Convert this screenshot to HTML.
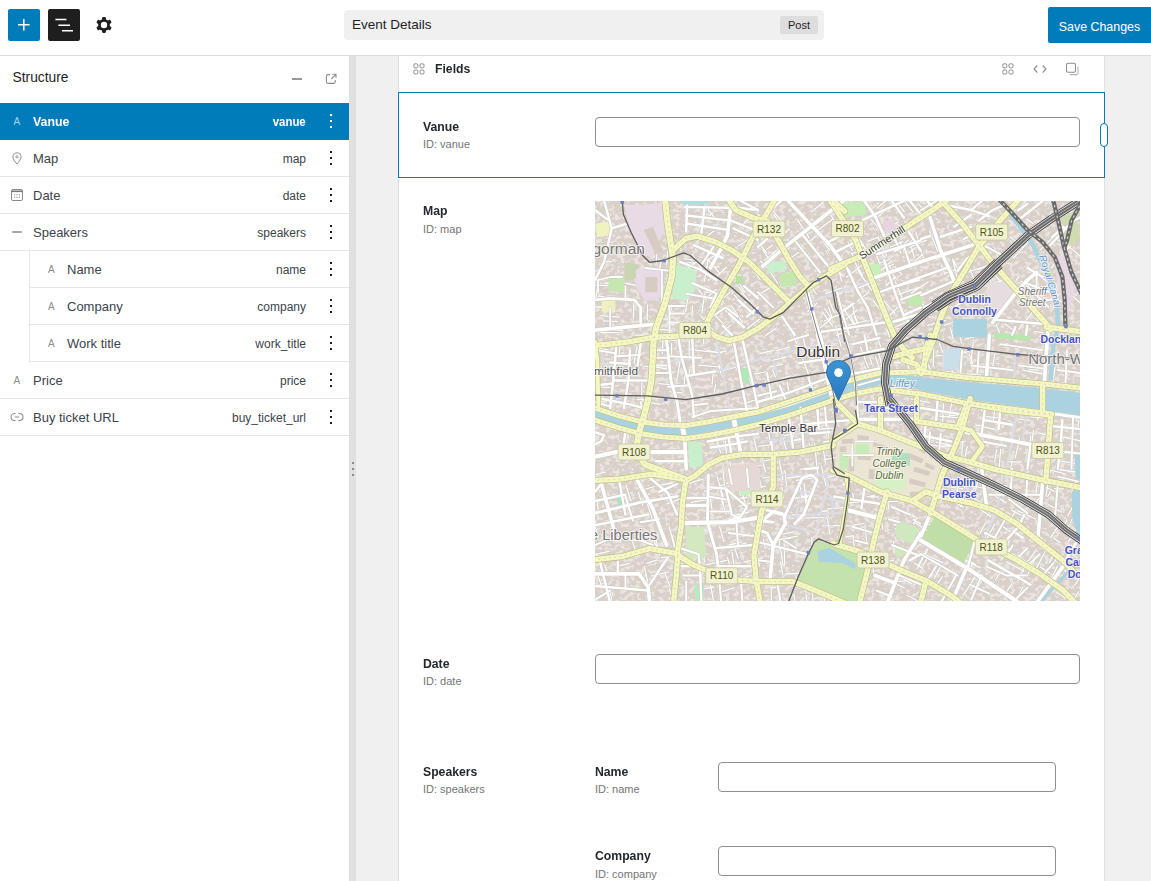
<!DOCTYPE html>
<html lang="en">
<head>
<meta charset="utf-8">
<title>Event Details</title>
<style>
*{box-sizing:border-box;margin:0;padding:0}
html,body{width:1151px;height:881px;overflow:hidden;background:#f0f0f0;font-family:"Liberation Sans",sans-serif;font-size:13px;color:#1e1e1e}
.abs{position:absolute}
#topbar{position:absolute;left:0;top:0;width:1151px;height:56px;background:#fff;border-bottom:1px solid #ddd}
.tbtn{position:absolute;top:9px;width:32px;height:32px;border-radius:2px}
#btn-add{left:8px;background:#007cba}
#btn-list{left:48px;background:#1e1e1e}
#titlebar{position:absolute;left:344px;top:10px;width:480px;height:30px;background:#f0f0f0;border-radius:4px}
#titlebar .t{position:absolute;left:8px;top:7px;font-size:13.5px;color:#1e1e1e}
#titlebar .badge{position:absolute;left:436px;top:6px;width:38px;height:18px;background:#ddd;border-radius:2px;font-size:11px;text-align:center;line-height:18px;color:#1e1e1e}
#save{position:absolute;left:1048px;top:7px;width:103px;height:36px;background:#007cba;color:#fff;font-size:12.4px;line-height:41px;text-align:center;border-radius:2px 0 0 2px}
#sidebar{position:absolute;left:0;top:56px;width:349px;height:825px;background:#fff}
#resizer{position:absolute;left:349px;top:56px;width:7px;height:825px;background:#e0e0e0}
#resizer i{position:absolute;left:3px;width:2px;height:2px;background:#8a8a8a}
#sidebar .head{position:absolute;left:12.5px;top:14px;font-size:13.8px;color:#1e1e1e}
.row{position:absolute;left:0;width:349px;height:37px;border-bottom:1px solid #e6e6e6;font-size:13px;color:#3c434a}
.row .lbl{position:absolute;left:33px;top:11px}
.row .id{position:absolute;right:43px;top:12px;font-size:12px}
.row.sub{left:29px;width:320px;border-left:1px solid #e6e6e6}
.row.sub .lbl{left:37px}
.row.sel{background:#007cba;color:#fff;border-bottom-color:#007cba}
.row.sel .lbl,.row.sel .id{font-weight:bold;transform:scaleX(.95);transform-origin:left}
.row.sel .id{transform-origin:right}
.ic{position:absolute}
.icA{position:absolute;left:13.5px;top:13px;font-size:10px;color:#8c8c8c;line-height:12px}
.row.sub .icA{left:18px}
.row.sel .icA{color:#a6d0e8;font-weight:normal}
.dots{position:absolute;right:17px;top:11px;width:2px;height:14px}
.dots i{position:absolute;left:0;width:2px;height:2px;background:#1e1e1e}
.row.sel .dots i{background:#fff}
#panel{position:absolute;left:398px;top:56px;width:707px;height:825px;background:#fff;border-left:1px solid #e0e0e0;border-right:1px solid #e0e0e0}
#selbox{position:absolute;left:398px;top:92px;width:707px;height:86px;border:1px solid #007cba;background:#fff}
.flabel{position:absolute;font-size:13px;font-weight:bold;color:#23282d;transform:scaleX(.94);transform-origin:left}
.fid{position:absolute;font-size:11px;color:#757575}
.inp{position:absolute;height:30px;border:1px solid #8c8f94;border-radius:4px;background:#fff}
#handle{position:absolute;left:1100px;top:123px;width:8px;height:24px;border:1.5px solid #007cba;border-radius:4px;background:#fff}
#map{position:absolute;left:595px;top:201px;width:485px;height:400px;background:#ddd6cf;overflow:hidden}
</style>
</head>
<body>
<div id="topbar">
  <div class="tbtn" id="btn-add"><svg width="32" height="32" viewBox="0 0 32 32"><path d="M15.8 9.9v11.6M10 15.7h11.6" stroke="#fff" stroke-width="1.5" fill="none"/></svg></div>
  <div class="tbtn" id="btn-list"><svg width="32" height="32" viewBox="0 0 32 32"><path d="M7.4 10.5h11M10.4 16.3h11.6M14 21.8h11" stroke="#fff" stroke-width="1.6" fill="none"/></svg></div>
  <svg id="gear" style="position:absolute;left:94px;top:15px" width="20" height="20" viewBox="-10 -10 20 20"><g fill="#1e1e1e"><circle r="5.9"/><g id="teeth"><rect x="-1.9" y="-7.9" width="3.8" height="15.8" rx="1.1"/><rect x="-1.9" y="-7.9" width="3.8" height="15.8" rx="1.1" transform="rotate(60)"/><rect x="-1.9" y="-7.9" width="3.8" height="15.8" rx="1.1" transform="rotate(120)"/></g></g><circle r="3.2" fill="#fff"/></svg>
  <div id="titlebar"><span class="t">Event Details</span><span class="badge">Post</span></div>
  <div id="save">Save Changes</div>
</div>
<div id="sidebar">
  <div class="head">Structure</div>
  <svg class="abs" style="left:291px;top:17px" width="12" height="12" viewBox="0 0 12 12"><path d="M1 6h10" stroke="#8c8c8c" stroke-width="1.8"/></svg>
  <svg class="abs" style="left:325px;top:16px" width="13" height="13" viewBox="0 0 13 13"><path d="M5 2.6H3A1.6 1.6 0 0 0 1.4 4.2v5.6A1.6 1.6 0 0 0 3 11.4h5.6a1.6 1.6 0 0 0 1.6-1.6V8" fill="none" stroke="#8c8c8c" stroke-width="1.1"/><path d="M6.4 7L10.8 2.4M7.4 2.2h3.6v3.6" fill="none" stroke="#8c8c8c" stroke-width="1.1"/></svg>
  <div class="row sel" style="top:47px"><span class="icA">A</span><span class="lbl">Vanue</span><span class="id">vanue</span><span class="dots"><i style="top:0"></i><i style="top:6px"></i><i style="top:12px"></i></span></div>
  <div class="row" style="top:84px"><svg class="ic" style="left:12px;top:12px" width="10" height="13" viewBox="0 0 10 13"><path d="M5 .8C2.6.8.9 2.6.9 4.8c0 2.6 2.6 5.6 4.1 7.2 1.500-1.600 4.100-4.600 4.100-7.200C9.100 2.600 7.400.800 5 .800z" fill="none" stroke="#8c8c8c" stroke-width="1"/><circle cx="5" cy="4.800" r="1.100" fill="none" stroke="#8c8c8c" stroke-width=".9"/></svg><span class="lbl">Map</span><span class="id">map</span><span class="dots"><i style="top:0"></i><i style="top:6px"></i><i style="top:12px"></i></span></div>
  <div class="row" style="top:121px"><svg class="ic" style="left:10px;top:11px" width="14" height="14" viewBox="0 0 14 14"><rect x="1.500" y="1.500" width="11" height="11" rx="1.500" fill="none" stroke="#8c8c8c" stroke-width="1"/><path d="M1.500 3.300h11" stroke="#757575" stroke-width="1.600"/><path d="M4 6.800h1.200M6.400 6.800h1.200M8.800 6.800h1.200M4 9.300h1.200M6.400 9.300h1.200M8.800 9.300h1.200" stroke="#8c8c8c" stroke-width="1"/></svg><span class="lbl">Date</span><span class="id">date</span><span class="dots"><i style="top:0"></i><i style="top:6px"></i><i style="top:12px"></i></span></div>
  <div class="row" style="top:158px"><svg class="ic" style="left:11px;top:12px" width="12" height="12" viewBox="0 0 12 12"><path d="M1.200 6h9.600" stroke="#8c8c8c" stroke-width="1.600"/></svg><span class="lbl">Speakers</span><span class="id">speakers</span><span class="dots"><i style="top:0"></i><i style="top:6px"></i><i style="top:12px"></i></span></div>
  <div class="row sub" style="top:195px"><span class="icA">A</span><span class="lbl">Name</span><span class="id">name</span><span class="dots"><i style="top:0"></i><i style="top:6px"></i><i style="top:12px"></i></span></div>
  <div class="row sub" style="top:232px"><span class="icA">A</span><span class="lbl">Company</span><span class="id">company</span><span class="dots"><i style="top:0"></i><i style="top:6px"></i><i style="top:12px"></i></span></div>
  <div class="row sub" style="top:269px"><span class="icA">A</span><span class="lbl">Work title</span><span class="id">work_title</span><span class="dots"><i style="top:0"></i><i style="top:6px"></i><i style="top:12px"></i></span></div>
  <div class="row" style="top:306px"><span class="icA">A</span><span class="lbl">Price</span><span class="id">price</span><span class="dots"><i style="top:0"></i><i style="top:6px"></i><i style="top:12px"></i></span></div>
  <div class="row" style="top:343px"><svg class="ic" style="left:10px;top:13px" width="14" height="10" viewBox="0 0 14 10"><path d="M5.600 1.500H4.600a3.500 3.500 0 0 0 0 7h1M8.400 1.500h1a3.500 3.500 0 0 1 0 7h-1M4.800 5h4.400" fill="none" stroke="#8c8c8c" stroke-width="1.100"/></svg><span class="lbl">Buy ticket URL</span><span class="id">buy_ticket_url</span><span class="dots"><i style="top:0"></i><i style="top:6px"></i><i style="top:12px"></i></span></div>
</div>
<div id="resizer"><i style="top:406px"></i><i style="top:412px"></i><i style="top:418px"></i></div>
<div id="panel"></div>
<div class="flabel" style="left:435px;top:61px">Fields</div>
<svg class="abs" style="left:413px;top:63px" width="12" height="12" viewBox="0 0 12 12"><g fill="none" stroke="#8c8c8c" stroke-width="1"><rect x=".8" y=".8" width="4" height="4" rx="1.2"/><rect x="7" y=".8" width="4" height="4" rx="1.2"/><rect x=".8" y="7" width="4" height="4" rx="1.2"/><rect x="7" y="7" width="4" height="4" rx="1.2"/></g></svg>
<svg class="abs" style="left:1002px;top:63px" width="12" height="12" viewBox="0 0 12 12"><g fill="none" stroke="#8c8c8c" stroke-width="1"><rect x=".8" y=".8" width="4" height="4" rx="1.2"/><rect x="7" y=".8" width="4" height="4" rx="1.2"/><rect x=".8" y="7" width="4" height="4" rx="1.2"/><rect x="7" y="7" width="4" height="4" rx="1.2"/></g></svg>
<svg class="abs" style="left:1033px;top:64px" width="14" height="10" viewBox="0 0 14 10"><path d="M4.300 1.500L1 5l3.300 3.500M9.700 1.500L13 5 9.700 8.500" fill="none" stroke="#8c8c8c" stroke-width="1.100"/></svg>
<svg class="abs" style="left:1065px;top:62px" width="15" height="14" viewBox="0 0 15 14"><rect x="1.500" y="1.300" width="9" height="9" rx="1.600" fill="none" stroke="#8c8c8c" stroke-width="1.100"/><path d="M13 4.500v6.500a1.600 1.600 0 0 1-1.600 1.600H4.800" fill="none" stroke="#b4b4b4" stroke-width="1.100"/></svg>
<div id="selbox"></div>
<div class="flabel" style="left:423px;top:119px">Vanue</div>
<div class="fid" style="left:423px;top:138px">ID: vanue</div>
<div class="inp" style="left:595px;top:117px;width:485px"></div>
<div id="handle"></div>
<div class="flabel" style="left:423px;top:203px">Map</div>
<div class="fid" style="left:423px;top:223px">ID: map</div>
<div id="map"><svg width="485" height="400" viewBox="0 0 485 400" style="display:block">
<defs><filter id="tx" x="0" y="0" width="100%" height="100%"><feTurbulence type="fractalNoise" baseFrequency="0.2 0.26" numOctaves="2" seed="7" result="n"/><feColorMatrix in="n" type="matrix" values="0 0 0 0 0.93  0 0 0 0 0.90  0 0 0 0 0.875  0 0 0 7 -3.5"/></filter></defs>
<rect width="485" height="400" fill="#d9d0c9"/>
<rect width="485" height="400" filter="url(#tx)" opacity=".6"/>
<path d="M74.3 325.9L79.4 346.1M97.0 375.5L110.9 370.7M132.3 356.2L134.8 364.1M106.2 339.4L109.6 360.6M7.2 287.8L12.5 301.7M70.2 373.0L75.1 386.0M102.3 331.1L116.4 327.8M136.9 351.2L140.4 372.8M9.8 364.2L13.4 375.0M156.9 373.9L159.3 386.4M74.3 387.7L80.8 407.2M125.6 297.4L131.3 312.8M121.9 275.1L128.2 295.6M130.2 289.4L132.8 296.8M116.0 288.4L125.5 285.7M28.9 307.3L41.4 302.8M140.3 298.5L151.7 296.3M15.0 390.4L18.1 406.8M51.4 299.7L57.1 317.4M37.4 340.8L42.8 355.6M76.9 334.4L82.7 355.0M145.5 377.8L154.3 374.8M152.3 287.0L158.1 304.1M61.6 284.9L77.4 282.0M115.4 298.2L117.1 308.6M23.4 365.0L34.5 362.3M138.2 342.6L143.1 357.2M1.9 300.0L3.6 309.9M59.2 339.9L62.5 348.9M158.9 345.6L164.7 365.2M1.4 273.4L10.2 271.2M-7.0 355.0L14.0 350.4M163.6 274.0L166.1 285.5M111.6 363.6L131.6 359.3M107.0 388.2L119.1 386.0M133.4 347.1L151.5 341.9M92.9 282.6L108.0 278.2M110.2 322.1L130.1 318.9M131.7 282.5L144.9 279.2M71.9 302.8L86.9 297.1M144.0 305.4L159.7 301.2M30.9 283.9L36.0 300.2M140.5 314.0L153.8 311.0M126.6 391.0L139.4 386.7M44.7 289.9L59.8 285.5M115.5 383.8L119.2 403.2M43.2 291.3L47.6 304.3M50.4 372.1L53.7 386.1M1.3 384.6L9.1 382.4M49.3 365.3L52.7 380.5M1.8 371.3L6.4 384.4M102.5 324.4L105.1 331.7M148.8 361.2L167.5 356.8M0.5 326.7L3.1 336.1M51.8 362.4L62.3 358.9M56.0 375.1L73.8 370.8M109.3 290.5L129.1 283.3M59.8 333.9L64.6 354.0M66.1 356.8L86.9 352.6M103.8 353.9L107.9 372.7M159.3 329.1L163.2 350.5M131.3 318.4L151.1 312.3M124.7 326.0L128.8 340.7M131.2 288.6L132.8 296.4M23.6 332.7L25.4 341.6M147.5 335.7L164.6 332.4M82.0 309.5L91.7 306.0M132.0 344.5L146.4 341.1M145.8 287.6L151.4 306.5M87.2 297.3L101.9 294.9M-4.7 199.7L11.3 201.1M58.1 128.0L77.0 129.3M42.1 198.6L57.2 198.5M8.2 119.8L22.3 120.3M31.1 82.5L45.0 84.9M89.1 57.6L97.9 59.2M38.9 99.7L38.4 117.0M5.8 131.5L23.7 131.6M52.6 103.9L52.2 118.8M25.0 145.0L24.1 154.4M63.6 182.6L83.2 184.4M109.6 92.9L107.0 111.9M120.7 183.1L118.9 193.2M31.4 60.6L30.8 78.5M5.7 114.7L24.5 116.1M76.9 191.8L86.9 191.6M83.7 130.4L98.3 130.5M8.7 60.5L16.8 60.7M9.9 82.0L25.3 83.4M113.0 58.5L109.5 80.1M93.0 97.2L90.5 110.9M72.7 50.3L71.5 63.7M49.7 165.1L59.3 166.7M61.6 52.6L61.4 62.0M94.6 148.1L112.0 150.7M118.7 168.5L117.1 183.0M94.9 168.2L91.8 186.1M85.1 160.1L81.7 180.0M-0.4 105.7L17.4 106.9M76.6 142.4L76.7 154.8M42.1 145.6L39.0 162.3M113.6 150.7L126.4 151.9M-8.0 145.8L13.5 148.8M-0.5 84.1L12.6 84.6M108.7 132.1L108.7 142.9M111.8 149.3L127.0 152.1M83.1 61.8L99.1 61.8M13.3 129.2L27.3 129.4M39.9 134.1L61.1 134.0M73.0 138.8L84.2 139.4M2.4 86.1L0.9 97.4M46.9 180.5L46.7 198.8M102.4 66.1L124.3 65.9M109.7 91.0L123.8 92.1M47.4 200.2L65.0 203.4M70.6 122.9L79.2 123.8M14.9 114.0L15.0 128.9M64.4 117.5L75.3 118.4M103.4 164.1L125.3 166.2M94.2 138.6L94.1 158.9M68.1 135.1L67.4 152.4M25.0 201.3L34.8 202.6M3.6 95.0L11.0 96.3M65.5 61.6L64.5 70.1M76.7 103.4L74.8 118.5M89.5 174.7L89.2 186.9M74.9 160.7L74.8 179.9M97.6 104.9L96.8 115.8M60.0 165.8L71.7 168.0M5.4 185.8L17.9 186.7M206.1 86.9L216.6 98.2M143.9 86.0L148.5 92.7M255.8 31.4L267.3 45.0M177.2 9.0L188.6 22.7M312.3 129.6L328.9 117.0M168.0 49.2L174.5 58.7M177.3 52.3L186.3 46.4M137.7 71.2L145.8 81.1M222.3 29.8L237.8 17.9M95.7 72.7L105.0 66.5M242.7 115.1L259.9 102.1M109.5 3.6L120.9 18.5M243.7 21.7L250.7 17.2M143.6 106.5L152.2 100.2M170.8 134.4L181.4 127.0M262.1 100.2L274.0 91.0M247.5 121.3L262.5 109.1M316.4 92.1L333.3 80.8M188.4 62.3L203.9 51.2M178.8 13.7L191.4 31.6M324.2 3.6L331.3 12.4M275.6 18.1L286.9 30.4M308.3 -1.3L318.1 11.1M148.1 93.0L154.9 100.7M158.8 26.5L166.1 20.1M285.3 69.7L296.9 59.8M171.4 65.2L182.8 82.5M102.9 131.1L111.0 124.7M213.0 41.8L224.6 32.3M93.3 66.9L101.9 60.7M235.5 13.9L245.5 28.5M300.1 65.5L307.1 73.8M218.6 23.3L228.0 17.4M291.1 117.7L305.0 104.3M112.5 58.1L124.1 71.5M296.5 34.3L305.0 47.6M108.8 118.1L124.9 105.0M128.3 106.4L137.3 118.2M165.7 60.0L171.0 66.2M113.7 58.7L127.0 47.7M246.7 -6.5L257.2 9.9M227.3 57.5L233.5 66.1M139.6 75.1L149.7 91.2M161.8 39.7L171.4 51.4M139.8 94.4L146.2 103.1M264.5 38.3L272.9 51.3M114.3 94.6L121.0 88.4M291.0 84.4L300.7 75.7M121.7 51.4L127.9 58.4M214.1 81.8L221.4 93.0M169.2 59.2L179.8 52.0M325.1 99.8L336.2 113.4M171.5 48.4L177.4 44.0M212.6 110.8L221.9 102.2M275.2 124.7L282.7 119.1M123.4 101.0L134.6 91.7M288.5 32.1L302.5 21.2M111.0 36.0L119.0 30.1M313.1 52.2L322.8 45.3M120.2 114.1L134.8 130.0M152.3 127.4L164.6 118.1M117.8 115.8L131.1 106.8M229.8 107.7L235.6 116.6M100.2 21.1L105.2 27.5M161.7 95.2L175.9 86.1M281.8 7.2L294.0 -2.8M184.9 73.3L190.6 80.5M228.0 40.5L234.7 49.2M123.6 135.4L135.9 123.6M239.5 97.1L249.9 89.0M327.9 117.3L339.6 109.1M225.6 126.5L236.1 117.9M306.7 47.4L317.4 39.2M264.8 72.3L276.6 89.0M105.7 21.9L117.8 11.7M103.5 88.7L111.5 98.9M185.6 35.7L194.3 28.0M248.9 108.0L260.6 126.0M271.3 72.3L277.1 80.8M117.8 79.0L131.6 66.2M163.0 47.5L170.7 40.1M185.1 40.1L195.6 56.2M307.9 44.1L313.4 39.0M202.6 18.8L214.3 37.0M136.4 104.5L147.5 121.7M303.2 130.6L309.1 138.1M303.3 2.8L309.2 10.7M307.7 112.6L314.5 122.2M313.6 66.0L326.5 54.2M261.7 22.2L269.4 30.9M279.1 43.9L290.3 56.7M143.3 45.0L156.6 36.3M244.1 15.4L253.1 8.9M216.6 10.8L228.2 1.5M283.7 15.3L291.9 8.3M158.9 69.6L165.0 78.4M97.1 53.2L109.0 71.4M206.9 30.9L223.1 17.6M248.0 109.4L258.0 102.0M251.5 76.3L267.0 64.2M127.7 88.3L141.6 75.8M278.0 99.5L289.6 114.1M231.0 63.3L237.4 71.4M227.1 110.7L237.7 124.9M211.6 56.0L216.5 61.4M106.2 115.3L118.6 129.7M144.6 25.5L159.6 14.0M240.1 66.7L248.1 75.2M289.4 19.8L294.4 26.5M288.6 99.8L300.2 112.6M269.5 165.1L274.0 176.7M399.5 46.6L405.8 63.9M274.8 156.0L277.0 163.2M305.1 40.4L309.2 51.1M357.6 58.2L362.0 76.1M311.7 160.5L315.2 170.6M334.8 30.5L342.9 50.6M292.1 128.5L294.6 136.0M304.0 93.3L323.2 86.7M262.9 87.1L280.3 80.2M268.0 60.6L271.2 69.5M401.3 123.7L406.5 136.4M241.5 134.3L253.2 129.2M264.5 68.4L267.4 75.1M278.4 77.0L282.9 94.1M363.6 130.3L366.7 142.3M295.0 49.2L305.7 44.1M314.7 46.2L331.9 39.2M259.2 114.9L262.1 121.9M324.9 47.9L330.0 60.2M340.0 59.1L356.5 52.1M300.5 80.9L307.3 97.3M288.4 67.5L298.9 63.0M327.6 140.8L334.8 155.6M383.4 68.5L399.1 62.0M372.5 71.1L392.8 64.5M295.6 46.2L307.8 40.6M279.9 50.5L285.3 63.9M346.4 64.1L349.7 73.0M258.1 110.4L263.1 122.8M230.7 92.7L247.2 86.9M241.5 98.5L247.1 110.3M272.5 40.4L283.6 36.2M277.5 121.1L281.6 136.0M394.5 78.2L400.1 93.4M332.7 124.3L350.6 119.6M374.0 153.0L378.0 163.4M257.1 102.3L259.1 109.6M256.5 51.9L264.5 72.0M233.5 106.1L236.8 116.1M342.7 105.1L348.4 118.4M390.5 84.9L408.9 78.5M355.2 126.7L358.3 138.0M252.7 124.4L271.5 119.6M281.5 133.9L285.6 145.8M285.3 62.0L295.2 57.8M243.1 51.0L250.3 47.7M360.0 105.2L372.5 99.4M241.4 60.9L246.8 80.2M350.5 72.1L362.9 68.4M358.5 155.2L369.6 150.7M348.9 124.4L361.5 120.0M294.8 130.0L303.3 127.5M333.1 163.4L336.0 170.0M298.4 127.0L314.2 119.8M240.5 124.3L246.1 145.4M356.9 169.0L361.7 179.2M325.8 99.2L328.6 106.1M374.0 65.9L381.2 83.5M398.8 80.8L404.7 98.3M251.0 62.7L268.9 56.3M316.6 46.6L319.4 57.1M256.1 115.6L262.8 129.5M294.4 64.8L300.0 77.9M283.2 36.8L291.9 55.2M265.6 146.1L273.2 166.7M298.9 34.2L305.7 52.0M274.3 169.0L289.9 163.9M370.1 138.2L383.4 134.8M253.1 41.2L257.3 49.7M320.7 30.9L324.1 42.0M323.7 144.9L325.5 151.9M365.3 152.8L377.7 149.0M392.4 92.4L400.7 90.3M229.5 119.8L248.5 111.7M344.4 142.7L349.0 154.3M280.5 155.9L284.4 167.6M358.5 59.1L363.6 70.0M257.0 52.7L273.3 47.0M234.1 99.1L239.1 111.6M479.7 301.9L472.7 315.2M312.0 394.3L328.1 402.8M378.5 362.0L372.5 370.4M479.3 314.4L471.4 329.7M332.6 348.4L322.2 367.6M416.7 382.7L411.3 391.4M398.8 294.3L411.2 301.9M417.3 329.5L428.9 336.9M409.6 337.1L402.4 351.4M413.4 347.5L406.2 359.2M477.4 366.8L490.0 372.9M380.3 375.6L368.5 393.9M347.5 375.8L339.1 387.4M439.6 338.2L455.5 349.4M422.6 309.6L440.8 318.0M453.6 303.8L466.7 311.2M404.8 372.1L400.5 379.0M462.5 365.2L453.9 382.1M320.3 321.7L335.9 332.5M462.5 375.3L457.5 386.4M459.9 350.2L454.3 361.7M328.3 352.8L348.1 361.9M419.5 331.8L427.8 337.2M419.3 311.9L413.7 322.2M319.6 362.2L327.8 367.4M476.0 351.2L472.2 359.1M432.8 359.8L423.1 379.5M330.1 351.8L324.0 363.4M388.2 337.8L380.8 348.7M335.7 347.5L351.2 355.8M461.3 358.2L454.9 367.5M441.2 348.9L433.8 359.4M354.8 329.7L349.3 341.7M416.6 309.1L432.1 317.2M351.0 324.2L342.1 342.6M414.8 339.6L403.8 356.0M369.6 324.6L364.9 331.5M461.0 391.0L471.3 397.4M370.6 332.5L363.2 344.4M483.8 390.5L475.3 404.1M411.7 360.9L428.8 370.3M367.9 357.5L380.6 363.4M371.4 297.3L365.5 305.5M333.1 356.2L328.6 363.1M445.5 366.1L454.6 372.0M296.6 380.9L309.3 386.9M361.9 344.5L368.0 348.7M347.3 339.3L364.3 347.4M318.6 340.1L314.1 347.7M379.5 286.8L373.6 295.7M388.8 376.1L381.2 389.5M482.1 341.5L476.9 349.2M483.5 324.0L473.1 341.1M440.1 358.3L431.7 375.6M322.3 316.4L318.5 322.8M300.1 327.7L316.9 338.0M472.0 318.9L468.0 326.7M480.4 341.7L469.7 358.9M350.1 366.3L360.7 373.7M391.4 320.3L385.0 332.1M456.5 288.7L452.7 295.5M335.6 293.1L346.8 299.7M345.9 364.9L339.3 377.5M481.4 279.8L476.1 291.8M405.6 323.8L415.7 331.1M362.4 335.5L354.2 349.0M313.9 311.9L320.4 316.1M462.8 325.7L455.4 336.8M484.3 377.1L479.9 384.1M450.3 350.3L441.3 367.4M417.7 345.3L413.5 351.7M469.7 369.6L476.0 373.5M369.2 359.5L385.6 366.8M441.2 333.3L447.9 338.0M374.8 295.3L386.8 301.8M323.6 377.5L319.2 384.3M318.2 318.4L325.6 322.9M330.1 327.4L348.0 338.0M458.0 336.8L465.3 341.8M427.8 386.2L421.7 397.3M447.5 291.7L440.6 302.5M330.3 321.4L344.5 328.3M399.9 322.7L392.4 336.7M402.9 336.8L413.1 343.7M335.5 311.0L350.9 319.1M307.2 377.1L316.5 382.6M417.9 343.7L410.6 355.0M384.4 307.6L395.7 315.6M451.5 286.6L462.0 291.5M355.1 298.5L368.2 306.3M331.3 268.8L350.0 272.5M423.1 197.5L422.0 212.5M462.7 259.6L482.9 262.8M373.6 269.3L369.5 286.6M322.9 245.7L333.6 246.7M346.6 235.6L345.5 246.4M407.0 274.0L405.9 285.1M424.6 237.2L420.4 256.5M463.7 268.5L480.4 271.0M383.5 260.4L382.5 281.5M442.5 280.2L440.9 292.6M356.1 286.1L368.2 288.0M338.4 274.1L334.5 290.5M483.9 219.3L482.5 228.0M327.4 195.5L344.3 196.3M453.5 268.6L470.2 272.8M347.1 244.8L362.0 245.5M438.5 229.4L437.1 239.2M414.6 282.1L413.8 296.4M373.0 262.1L384.4 262.9M462.7 275.5L483.4 280.5M412.3 260.6L426.7 261.2M328.5 242.7L349.2 246.1M459.7 287.6L468.4 287.9M435.6 234.7L434.8 254.2M315.7 197.9L334.5 201.6M380.7 223.9L399.7 228.5M367.3 241.7L366.6 260.2M389.3 215.3L406.3 217.1M360.9 240.1L370.2 240.8M424.4 218.2L435.0 219.3M344.5 215.1L364.6 216.9M433.8 262.3L431.9 280.1M354.9 214.1L373.3 215.0M383.5 277.1L380.5 289.3M446.9 269.9L455.8 271.0M372.2 245.5L369.7 258.0M317.7 241.1L336.8 243.7M348.5 203.0L347.5 223.7M369.5 282.7L389.9 287.6M357.8 196.0L353.9 216.8M468.1 236.0L485.6 239.9M475.6 194.6L474.9 205.6M374.5 207.3L373.7 214.9M416.9 261.0L414.7 275.9M356.7 199.6L364.7 201.5M407.6 198.6L403.6 219.1M452.7 283.6L451.0 294.9M401.0 202.2L397.8 221.6M443.5 231.8L450.6 233.5M443.2 209.2L442.5 218.7M405.6 248.2L404.1 267.1M374.0 193.5L373.4 200.7M401.7 248.6L399.6 261.0M419.1 224.2L416.8 244.3M465.3 215.3L477.1 216.9M341.1 241.2L360.9 245.5M436.0 215.8L445.5 216.7M359.9 201.9L381.0 203.3M396.9 283.5L412.2 285.2M406.0 142.3L413.0 142.7M341.6 154.1L355.4 155.7M378.3 141.2L375.8 162.6M460.1 165.9L458.6 176.3M400.2 150.8L397.7 165.2M371.5 172.8L385.7 174.0M362.3 172.8L372.2 173.3M427.6 169.1L448.0 173.0M352.0 170.6L370.8 173.4M338.8 145.2L338.1 166.0M472.9 170.4L470.5 186.3M342.9 181.1L359.9 181.0M434.2 168.7L444.0 169.2M439.6 130.7L448.4 131.7M263.1 177.7L281.4 173.9M177.2 159.3L191.2 156.0M153.1 174.0L159.3 191.9M164.7 152.5L179.1 149.3M282.6 147.4L286.6 164.2M280.8 181.0L292.0 179.0M159.4 173.1L171.1 170.7M207.9 158.4L214.9 177.1M214.8 149.8L224.3 146.7M177.6 168.6L180.3 175.9M181.8 149.3L194.6 146.2M192.2 181.2L193.7 189.9M275.9 205.9L292.0 201.8M207.2 133.3L212.7 154.5M209.9 152.5L218.6 149.3M247.3 183.7L258.8 181.2M127.7 169.7L140.7 166.1M123.9 151.3L131.6 149.9M187.3 177.4L195.9 174.9M229.6 182.0L245.7 177.4M123.9 163.4L125.8 172.1M197.1 130.8L201.6 142.9M213.8 155.8L227.8 153.2M149.3 202.7L160.2 198.8M268.4 151.4L280.9 147.8M174.1 166.2L187.5 163.2M159.1 237.7L162.5 253.7M228.8 258.8L242.7 256.2M219.7 242.5L221.7 264.1M205.2 296.8L216.5 295.4M192.8 240.6L206.2 238.7M139.0 279.3L160.4 275.7M134.8 260.8L138.3 278.9M124.3 282.5L128.6 303.9M227.5 243.0L230.5 262.1M205.3 268.4L223.6 266.0M181.1 291.3L183.1 306.6M210.6 290.2L211.9 302.0M173.0 227.7L175.4 242.4M132.8 285.6L149.7 284.1M166.7 255.5L170.6 271.1M140.9 282.9L161.9 279.5M203.6 278.1L207.3 295.1M179.6 217.8L182.3 229.9M144.1 285.5L145.4 294.6M109.1 229.8L118.5 227.6M167.8 276.9L178.7 275.6M127.7 267.0L129.9 286.8M120.1 261.1L139.8 256.9M184.4 260.1L188.0 278.9M189.1 234.9L199.2 232.5M157.3 288.0L170.6 285.2M147.1 277.8L156.6 276.4M130.3 240.4L132.2 260.4M205.8 223.1L206.8 230.7M102.5 226.7L118.0 224.2M232.4 218.9L233.5 234.9M120.9 234.9L125.6 251.7M163.9 245.3L175.7 243.8M128.8 246.0L140.9 243.5M188.1 237.3L191.3 248.6M176.2 239.3L177.6 253.3M192.4 277.0L208.6 275.0M169.4 259.8L182.0 257.3M228.5 241.0L247.1 237.9M221.6 266.7L223.2 274.0M226.4 265.6L231.2 285.1M151.7 266.0L165.4 264.3M218.3 228.5L239.0 227.1M176.8 238.6L177.9 253.7M96.3 301.3L117.9 297.6M195.7 224.4L198.9 236.9M210.2 268.7L223.7 267.6M232.3 276.3L245.8 272.9M147.5 259.6L150.3 274.5M195.1 240.1L205.0 237.3M298.7 340.2L299.1 352.2M277.8 360.9L278.4 371.8M272.0 295.8L279.4 294.5M227.8 390.2L229.5 399.5M185.4 345.9L188.1 365.1M237.8 324.7L245.5 324.7M178.1 339.6L195.6 337.2M287.5 361.1L298.6 359.5M201.2 375.8L202.8 386.3M242.5 324.6L259.6 324.9M227.4 325.2L235.3 324.5M298.9 324.0L306.2 322.6M291.4 292.2L293.9 307.8M232.7 307.9L251.1 306.3M285.2 278.0L285.5 286.2M248.9 359.2L250.8 378.8M275.8 296.2L283.5 295.9M286.5 320.8L287.8 328.1M245.4 380.1L249.0 399.5M186.7 286.1L188.6 297.3M184.2 338.6L184.7 348.1M232.4 317.7L234.9 333.0M186.6 311.0L189.5 326.9M216.8 336.2L216.9 352.0M256.4 324.4L269.0 322.4M197.4 313.7L205.1 313.7M285.3 300.9L302.8 300.4M176.2 388.3L176.5 406.8M241.6 395.0L254.0 394.9M294.7 381.1L315.0 379.7M214.0 346.8L223.1 346.9M251.1 308.2L251.3 316.1M224.6 377.7L225.2 387.5M254.4 302.0L266.8 300.3M201.6 279.3L216.8 277.0M198.8 393.1L201.0 404.8M185.0 338.3L202.4 335.2M210.5 316.9L231.6 316.6M226.0 352.6L228.3 370.6M189.1 342.5L189.7 364.0M185.4 360.7L187.8 373.6M157.7 290.5L179.2 289.5M258.2 335.2L260.1 354.5M248.7 281.6L257.4 280.6M168.4 338.2L170.1 347.5M209.3 283.0L210.6 302.3M230.2 349.4L250.5 348.6M190.8 373.0L212.4 371.9M225.5 310.5L232.6 309.8M161.2 294.7L175.8 293.4M264.0 313.9L285.9 312.9M216.4 380.8L218.0 399.8M211.0 392.9L212.6 407.0M257.9 292.3L258.7 300.5M269.9 324.3L271.6 340.2M189.8 269.3L192.1 289.5M175.3 387.0L184.2 386.2M182.6 333.9L199.4 330.9M198.3 297.5L218.9 293.7M250.8 336.0L258.3 334.7M400.2 75.0L407.5 81.9M424.1 75.4L411.4 91.8M460.1 34.2L445.0 49.1M396.8 58.9L410.2 72.2M480.4 24.3L466.6 40.4M459.5 95.8L467.0 101.6M467.3 53.5L456.3 67.0M473.0 60.6L467.5 68.4M410.0 122.8L419.9 130.6M443.7 74.6L458.0 84.8M474.9 46.2L490.0 59.5M426.0 80.1L436.3 88.2M474.1 80.2L461.9 95.6M414.9 35.8L427.9 46.2M432.9 41.6L418.6 56.7M480.7 4.2L471.0 17.6M478.2 42.1L471.1 49.7M439.5 31.6L432.7 40.7M461.4 37.7L475.1 47.1M469.7 75.1L465.0 81.7M432.2 -1.6L422.1 10.7M437.3 111.5L423.9 128.4M465.3 8.8L472.0 14.6M431.5 17.9L438.3 22.7M473.6 91.8L489.0 105.2" fill="none" stroke="#cbc5bf" stroke-width="2.2" stroke-linecap="round"/>
<path d="M74.3 325.9L79.4 346.1M97.0 375.5L110.9 370.7M132.3 356.2L134.8 364.1M106.2 339.4L109.6 360.6M7.2 287.8L12.5 301.7M70.2 373.0L75.1 386.0M102.3 331.1L116.4 327.8M136.9 351.2L140.4 372.8M9.8 364.2L13.4 375.0M156.9 373.9L159.3 386.4M74.3 387.7L80.8 407.2M125.6 297.4L131.3 312.8M121.9 275.1L128.2 295.6M130.2 289.4L132.8 296.8M116.0 288.4L125.5 285.7M28.9 307.3L41.4 302.8M140.3 298.5L151.7 296.3M15.0 390.4L18.1 406.8M51.4 299.7L57.1 317.4M37.4 340.8L42.8 355.6M76.9 334.4L82.7 355.0M145.5 377.8L154.3 374.8M152.3 287.0L158.1 304.1M61.6 284.9L77.4 282.0M115.4 298.2L117.1 308.6M23.4 365.0L34.5 362.3M138.2 342.6L143.1 357.2M1.9 300.0L3.6 309.9M59.2 339.9L62.5 348.9M158.9 345.6L164.7 365.2M1.4 273.4L10.2 271.2M-7.0 355.0L14.0 350.4M163.6 274.0L166.1 285.5M111.6 363.6L131.6 359.3M107.0 388.2L119.1 386.0M133.4 347.1L151.5 341.9M92.9 282.6L108.0 278.2M110.2 322.1L130.1 318.9M131.7 282.5L144.9 279.2M71.9 302.8L86.9 297.1M144.0 305.4L159.7 301.2M30.9 283.9L36.0 300.2M140.5 314.0L153.8 311.0M126.6 391.0L139.4 386.7M44.7 289.9L59.8 285.5M115.5 383.8L119.2 403.2M43.2 291.3L47.6 304.3M50.4 372.1L53.7 386.1M1.3 384.6L9.1 382.4M49.3 365.3L52.7 380.5M1.8 371.3L6.4 384.4M102.5 324.4L105.1 331.7M148.8 361.2L167.5 356.8M0.5 326.7L3.1 336.1M51.8 362.4L62.3 358.9M56.0 375.1L73.8 370.8M109.3 290.5L129.1 283.3M59.8 333.9L64.6 354.0M66.1 356.8L86.9 352.6M103.8 353.9L107.9 372.7M159.3 329.1L163.2 350.5M131.3 318.4L151.1 312.3M124.7 326.0L128.8 340.7M131.2 288.6L132.8 296.4M23.6 332.7L25.4 341.6M147.5 335.7L164.6 332.4M82.0 309.5L91.7 306.0M132.0 344.5L146.4 341.1M145.8 287.6L151.4 306.5M87.2 297.3L101.9 294.9M-4.7 199.7L11.3 201.1M58.1 128.0L77.0 129.3M42.1 198.6L57.2 198.5M8.2 119.8L22.3 120.3M31.1 82.5L45.0 84.9M89.1 57.6L97.9 59.2M38.9 99.7L38.4 117.0M5.8 131.5L23.7 131.6M52.6 103.9L52.2 118.8M25.0 145.0L24.1 154.4M63.6 182.6L83.2 184.4M109.6 92.9L107.0 111.9M120.7 183.1L118.9 193.2M31.4 60.6L30.8 78.5M5.7 114.7L24.5 116.1M76.9 191.8L86.9 191.6M83.7 130.4L98.3 130.5M8.7 60.5L16.8 60.7M9.9 82.0L25.3 83.4M113.0 58.5L109.5 80.1M93.0 97.2L90.5 110.9M72.7 50.3L71.5 63.7M49.7 165.1L59.3 166.7M61.6 52.6L61.4 62.0M94.6 148.1L112.0 150.7M118.7 168.5L117.1 183.0M94.9 168.2L91.8 186.1M85.1 160.1L81.7 180.0M-0.4 105.7L17.4 106.9M76.6 142.4L76.7 154.8M42.1 145.6L39.0 162.3M113.6 150.7L126.4 151.9M-8.0 145.8L13.5 148.8M-0.5 84.1L12.6 84.6M108.7 132.1L108.7 142.9M111.8 149.3L127.0 152.1M83.1 61.8L99.1 61.8M13.3 129.2L27.3 129.4M39.9 134.1L61.1 134.0M73.0 138.8L84.2 139.4M2.4 86.1L0.9 97.4M46.9 180.5L46.7 198.8M102.4 66.1L124.3 65.9M109.7 91.0L123.8 92.1M47.4 200.2L65.0 203.4M70.6 122.9L79.2 123.8M14.9 114.0L15.0 128.9M64.4 117.5L75.3 118.4M103.4 164.1L125.3 166.2M94.2 138.6L94.1 158.9M68.1 135.1L67.4 152.4M25.0 201.3L34.8 202.6M3.6 95.0L11.0 96.3M65.5 61.6L64.5 70.1M76.7 103.4L74.8 118.5M89.5 174.7L89.2 186.9M74.9 160.7L74.8 179.9M97.6 104.9L96.8 115.8M60.0 165.8L71.7 168.0M5.4 185.8L17.9 186.7M206.1 86.9L216.6 98.2M143.9 86.0L148.5 92.7M255.8 31.4L267.3 45.0M177.2 9.0L188.6 22.7M312.3 129.6L328.9 117.0M168.0 49.2L174.5 58.7M177.3 52.3L186.3 46.4M137.7 71.2L145.8 81.1M222.3 29.8L237.8 17.9M95.7 72.7L105.0 66.5M242.7 115.1L259.9 102.1M109.5 3.6L120.9 18.5M243.7 21.7L250.7 17.2M143.6 106.5L152.2 100.2M170.8 134.4L181.4 127.0M262.1 100.2L274.0 91.0M247.5 121.3L262.5 109.1M316.4 92.1L333.3 80.8M188.4 62.3L203.9 51.2M178.8 13.7L191.4 31.6M324.2 3.6L331.3 12.4M275.6 18.1L286.9 30.4M308.3 -1.3L318.1 11.1M148.1 93.0L154.9 100.7M158.8 26.5L166.1 20.1M285.3 69.7L296.9 59.8M171.4 65.2L182.8 82.5M102.9 131.1L111.0 124.7M213.0 41.8L224.6 32.3M93.3 66.9L101.9 60.7M235.5 13.9L245.5 28.5M300.1 65.5L307.1 73.8M218.6 23.3L228.0 17.4M291.1 117.7L305.0 104.3M112.5 58.1L124.1 71.5M296.5 34.3L305.0 47.6M108.8 118.1L124.9 105.0M128.3 106.4L137.3 118.2M165.7 60.0L171.0 66.2M113.7 58.7L127.0 47.7M246.7 -6.5L257.2 9.9M227.3 57.5L233.5 66.1M139.6 75.1L149.7 91.2M161.8 39.7L171.4 51.4M139.8 94.4L146.2 103.1M264.5 38.3L272.9 51.3M114.3 94.6L121.0 88.4M291.0 84.4L300.7 75.7M121.7 51.4L127.9 58.4M214.1 81.8L221.4 93.0M169.2 59.2L179.8 52.0M325.1 99.8L336.2 113.4M171.5 48.4L177.4 44.0M212.6 110.8L221.9 102.2M275.2 124.7L282.7 119.1M123.4 101.0L134.6 91.7M288.5 32.1L302.5 21.2M111.0 36.0L119.0 30.1M313.1 52.2L322.8 45.3M120.2 114.1L134.8 130.0M152.3 127.4L164.6 118.1M117.8 115.8L131.1 106.8M229.8 107.7L235.6 116.6M100.2 21.1L105.2 27.5M161.7 95.2L175.9 86.1M281.8 7.2L294.0 -2.8M184.9 73.3L190.6 80.5M228.0 40.5L234.7 49.2M123.6 135.4L135.9 123.6M239.5 97.1L249.9 89.0M327.9 117.3L339.6 109.1M225.6 126.5L236.1 117.9M306.7 47.4L317.4 39.2M264.8 72.3L276.6 89.0M105.7 21.9L117.8 11.7M103.5 88.7L111.5 98.9M185.6 35.7L194.3 28.0M248.9 108.0L260.6 126.0M271.3 72.3L277.1 80.8M117.8 79.0L131.6 66.2M163.0 47.5L170.7 40.1M185.1 40.1L195.6 56.2M307.9 44.1L313.4 39.0M202.6 18.8L214.3 37.0M136.4 104.5L147.5 121.7M303.2 130.6L309.1 138.1M303.3 2.8L309.2 10.7M307.7 112.6L314.5 122.2M313.6 66.0L326.5 54.2M261.7 22.2L269.4 30.9M279.1 43.9L290.3 56.7M143.3 45.0L156.6 36.3M244.1 15.4L253.1 8.9M216.6 10.8L228.2 1.5M283.7 15.3L291.9 8.3M158.9 69.6L165.0 78.4M97.1 53.2L109.0 71.4M206.9 30.9L223.1 17.6M248.0 109.4L258.0 102.0M251.5 76.3L267.0 64.2M127.7 88.3L141.6 75.8M278.0 99.5L289.6 114.1M231.0 63.3L237.4 71.4M227.1 110.7L237.7 124.9M211.6 56.0L216.5 61.4M106.2 115.3L118.6 129.7M144.6 25.5L159.6 14.0M240.1 66.7L248.1 75.2M289.4 19.8L294.4 26.5M288.6 99.8L300.2 112.6M269.5 165.1L274.0 176.7M399.5 46.6L405.8 63.9M274.8 156.0L277.0 163.2M305.1 40.4L309.2 51.1M357.6 58.2L362.0 76.1M311.7 160.5L315.2 170.6M334.8 30.5L342.9 50.6M292.1 128.5L294.6 136.0M304.0 93.3L323.2 86.7M262.9 87.1L280.3 80.2M268.0 60.6L271.2 69.5M401.3 123.7L406.5 136.4M241.5 134.3L253.2 129.2M264.5 68.4L267.4 75.1M278.4 77.0L282.9 94.1M363.6 130.3L366.7 142.3M295.0 49.2L305.7 44.1M314.7 46.2L331.9 39.2M259.2 114.9L262.1 121.9M324.9 47.9L330.0 60.2M340.0 59.1L356.5 52.1M300.5 80.9L307.3 97.3M288.4 67.5L298.9 63.0M327.6 140.8L334.8 155.6M383.4 68.5L399.1 62.0M372.5 71.1L392.8 64.5M295.6 46.2L307.8 40.6M279.9 50.5L285.3 63.9M346.4 64.1L349.7 73.0M258.1 110.4L263.1 122.8M230.7 92.7L247.2 86.9M241.5 98.5L247.1 110.3M272.5 40.4L283.6 36.2M277.5 121.1L281.6 136.0M394.5 78.2L400.1 93.4M332.7 124.3L350.6 119.6M374.0 153.0L378.0 163.4M257.1 102.3L259.1 109.6M256.5 51.9L264.5 72.0M233.5 106.1L236.8 116.1M342.7 105.1L348.4 118.4M390.5 84.9L408.9 78.5M355.2 126.7L358.3 138.0M252.7 124.4L271.5 119.6M281.5 133.9L285.6 145.8M285.3 62.0L295.2 57.8M243.1 51.0L250.3 47.7M360.0 105.2L372.5 99.4M241.4 60.9L246.8 80.2M350.5 72.1L362.9 68.4M358.5 155.2L369.6 150.7M348.9 124.4L361.5 120.0M294.8 130.0L303.3 127.5M333.1 163.4L336.0 170.0M298.4 127.0L314.2 119.8M240.5 124.3L246.1 145.4M356.9 169.0L361.7 179.2M325.8 99.2L328.6 106.1M374.0 65.9L381.2 83.5M398.8 80.8L404.7 98.3M251.0 62.7L268.9 56.3M316.6 46.6L319.4 57.1M256.1 115.6L262.8 129.5M294.4 64.8L300.0 77.9M283.2 36.8L291.9 55.2M265.6 146.1L273.2 166.7M298.9 34.2L305.7 52.0M274.3 169.0L289.9 163.9M370.1 138.2L383.4 134.8M253.1 41.2L257.3 49.7M320.7 30.9L324.1 42.0M323.7 144.9L325.5 151.9M365.3 152.8L377.7 149.0M392.4 92.4L400.7 90.3M229.5 119.8L248.5 111.7M344.4 142.7L349.0 154.3M280.5 155.9L284.4 167.6M358.5 59.1L363.6 70.0M257.0 52.7L273.3 47.0M234.1 99.1L239.1 111.6M479.7 301.9L472.7 315.2M312.0 394.3L328.1 402.8M378.5 362.0L372.5 370.4M479.3 314.4L471.4 329.7M332.6 348.4L322.2 367.6M416.7 382.7L411.3 391.4M398.8 294.3L411.2 301.9M417.3 329.5L428.9 336.9M409.6 337.1L402.4 351.4M413.4 347.5L406.2 359.2M477.4 366.8L490.0 372.9M380.3 375.6L368.5 393.9M347.5 375.8L339.1 387.4M439.6 338.2L455.5 349.4M422.6 309.6L440.8 318.0M453.6 303.8L466.7 311.2M404.8 372.1L400.5 379.0M462.5 365.2L453.9 382.1M320.3 321.7L335.9 332.5M462.5 375.3L457.5 386.4M459.9 350.2L454.3 361.7M328.3 352.8L348.1 361.9M419.5 331.8L427.8 337.2M419.3 311.9L413.7 322.2M319.6 362.2L327.8 367.4M476.0 351.2L472.2 359.1M432.8 359.8L423.1 379.5M330.1 351.8L324.0 363.4M388.2 337.8L380.8 348.7M335.7 347.5L351.2 355.8M461.3 358.2L454.9 367.5M441.2 348.9L433.8 359.4M354.8 329.7L349.3 341.7M416.6 309.1L432.1 317.2M351.0 324.2L342.1 342.6M414.8 339.6L403.8 356.0M369.6 324.6L364.9 331.5M461.0 391.0L471.3 397.4M370.6 332.5L363.2 344.4M483.8 390.5L475.3 404.1M411.7 360.9L428.8 370.3M367.9 357.5L380.6 363.4M371.4 297.3L365.5 305.5M333.1 356.2L328.6 363.1M445.5 366.1L454.6 372.0M296.6 380.9L309.3 386.9M361.9 344.5L368.0 348.7M347.3 339.3L364.3 347.4M318.6 340.1L314.1 347.7M379.5 286.8L373.6 295.7M388.8 376.1L381.2 389.5M482.1 341.5L476.9 349.2M483.5 324.0L473.1 341.1M440.1 358.3L431.7 375.6M322.3 316.4L318.5 322.8M300.1 327.7L316.9 338.0M472.0 318.9L468.0 326.7M480.4 341.7L469.7 358.9M350.1 366.3L360.7 373.7M391.4 320.3L385.0 332.1M456.5 288.7L452.7 295.5M335.6 293.1L346.8 299.7M345.9 364.9L339.3 377.5M481.4 279.8L476.1 291.8M405.6 323.8L415.7 331.1M362.4 335.5L354.2 349.0M313.9 311.9L320.4 316.1M462.8 325.7L455.4 336.8M484.3 377.1L479.9 384.1M450.3 350.3L441.3 367.4M417.7 345.3L413.5 351.7M469.7 369.6L476.0 373.5M369.2 359.5L385.6 366.8M441.2 333.3L447.9 338.0M374.8 295.3L386.8 301.8M323.6 377.5L319.2 384.3M318.2 318.4L325.6 322.9M330.1 327.4L348.0 338.0M458.0 336.8L465.3 341.8M427.8 386.2L421.7 397.3M447.5 291.7L440.6 302.5M330.3 321.4L344.5 328.3M399.9 322.7L392.4 336.7M402.9 336.8L413.1 343.7M335.5 311.0L350.9 319.1M307.2 377.1L316.5 382.6M417.9 343.7L410.6 355.0M384.4 307.6L395.7 315.6M451.5 286.6L462.0 291.5M355.1 298.5L368.2 306.3M331.3 268.8L350.0 272.5M423.1 197.5L422.0 212.5M462.7 259.6L482.9 262.8M373.6 269.3L369.5 286.6M322.9 245.7L333.6 246.7M346.6 235.6L345.5 246.4M407.0 274.0L405.9 285.1M424.6 237.2L420.4 256.5M463.7 268.5L480.4 271.0M383.5 260.4L382.5 281.5M442.5 280.2L440.9 292.6M356.1 286.1L368.2 288.0M338.4 274.1L334.5 290.5M483.9 219.3L482.5 228.0M327.4 195.5L344.3 196.3M453.5 268.6L470.2 272.8M347.1 244.8L362.0 245.5M438.5 229.4L437.1 239.2M414.6 282.1L413.8 296.4M373.0 262.1L384.4 262.9M462.7 275.5L483.4 280.5M412.3 260.6L426.7 261.2M328.5 242.7L349.2 246.1M459.7 287.6L468.4 287.9M435.6 234.7L434.8 254.2M315.7 197.9L334.5 201.6M380.7 223.9L399.7 228.5M367.3 241.7L366.6 260.2M389.3 215.3L406.3 217.1M360.9 240.1L370.2 240.8M424.4 218.2L435.0 219.3M344.5 215.1L364.6 216.9M433.8 262.3L431.9 280.1M354.9 214.1L373.3 215.0M383.5 277.1L380.5 289.3M446.9 269.9L455.8 271.0M372.2 245.5L369.7 258.0M317.7 241.1L336.8 243.7M348.5 203.0L347.5 223.7M369.5 282.7L389.9 287.6M357.8 196.0L353.9 216.8M468.1 236.0L485.6 239.9M475.6 194.6L474.9 205.6M374.5 207.3L373.7 214.9M416.9 261.0L414.7 275.9M356.7 199.6L364.7 201.5M407.6 198.6L403.6 219.1M452.7 283.6L451.0 294.9M401.0 202.2L397.8 221.6M443.5 231.8L450.6 233.5M443.2 209.2L442.5 218.7M405.6 248.2L404.1 267.1M374.0 193.5L373.4 200.7M401.7 248.6L399.6 261.0M419.1 224.2L416.8 244.3M465.3 215.3L477.1 216.9M341.1 241.2L360.9 245.5M436.0 215.8L445.5 216.7M359.9 201.9L381.0 203.3M396.9 283.5L412.2 285.2M406.0 142.3L413.0 142.7M341.6 154.1L355.4 155.7M378.3 141.2L375.8 162.6M460.1 165.9L458.6 176.3M400.2 150.8L397.7 165.2M371.5 172.8L385.7 174.0M362.3 172.8L372.2 173.3M427.6 169.1L448.0 173.0M352.0 170.6L370.8 173.4M338.8 145.2L338.1 166.0M472.9 170.4L470.5 186.3M342.9 181.1L359.9 181.0M434.2 168.7L444.0 169.2M439.6 130.7L448.4 131.7M263.1 177.7L281.4 173.9M177.2 159.3L191.2 156.0M153.1 174.0L159.3 191.9M164.7 152.5L179.1 149.3M282.6 147.4L286.6 164.2M280.8 181.0L292.0 179.0M159.4 173.1L171.1 170.7M207.9 158.4L214.9 177.1M214.8 149.8L224.3 146.7M177.6 168.6L180.3 175.9M181.8 149.3L194.6 146.2M192.2 181.2L193.7 189.9M275.9 205.9L292.0 201.8M207.2 133.3L212.7 154.5M209.9 152.5L218.6 149.3M247.3 183.7L258.8 181.2M127.7 169.7L140.7 166.1M123.9 151.3L131.6 149.9M187.3 177.4L195.9 174.9M229.6 182.0L245.7 177.4M123.9 163.4L125.8 172.1M197.1 130.8L201.6 142.9M213.8 155.8L227.8 153.2M149.3 202.7L160.2 198.8M268.4 151.4L280.9 147.8M174.1 166.2L187.5 163.2M159.1 237.7L162.5 253.7M228.8 258.8L242.7 256.2M219.7 242.5L221.7 264.1M205.2 296.8L216.5 295.4M192.8 240.6L206.2 238.7M139.0 279.3L160.4 275.7M134.8 260.8L138.3 278.9M124.3 282.5L128.6 303.9M227.5 243.0L230.5 262.1M205.3 268.4L223.6 266.0M181.1 291.3L183.1 306.6M210.6 290.2L211.9 302.0M173.0 227.7L175.4 242.4M132.8 285.6L149.7 284.1M166.7 255.5L170.6 271.1M140.9 282.9L161.9 279.5M203.6 278.1L207.3 295.1M179.6 217.8L182.3 229.9M144.1 285.5L145.4 294.6M109.1 229.8L118.5 227.6M167.8 276.9L178.7 275.6M127.7 267.0L129.9 286.8M120.1 261.1L139.8 256.9M184.4 260.1L188.0 278.9M189.1 234.9L199.2 232.5M157.3 288.0L170.6 285.2M147.1 277.8L156.6 276.4M130.3 240.4L132.2 260.4M205.8 223.1L206.8 230.7M102.5 226.7L118.0 224.2M232.4 218.9L233.5 234.9M120.9 234.9L125.6 251.7M163.9 245.3L175.7 243.8M128.8 246.0L140.9 243.5M188.1 237.3L191.3 248.6M176.2 239.3L177.6 253.3M192.4 277.0L208.6 275.0M169.4 259.8L182.0 257.3M228.5 241.0L247.1 237.9M221.6 266.7L223.2 274.0M226.4 265.6L231.2 285.1M151.7 266.0L165.4 264.3M218.3 228.5L239.0 227.1M176.8 238.6L177.9 253.7M96.3 301.3L117.9 297.6M195.7 224.4L198.9 236.9M210.2 268.7L223.7 267.6M232.3 276.3L245.8 272.9M147.5 259.6L150.3 274.5M195.1 240.1L205.0 237.3M298.7 340.2L299.1 352.2M277.8 360.9L278.4 371.8M272.0 295.8L279.4 294.5M227.8 390.2L229.5 399.5M185.4 345.9L188.1 365.1M237.8 324.7L245.5 324.7M178.1 339.6L195.6 337.2M287.5 361.1L298.6 359.5M201.2 375.8L202.8 386.3M242.5 324.6L259.6 324.9M227.4 325.2L235.3 324.5M298.9 324.0L306.2 322.6M291.4 292.2L293.9 307.8M232.7 307.9L251.1 306.3M285.2 278.0L285.5 286.2M248.9 359.2L250.8 378.8M275.8 296.2L283.5 295.9M286.5 320.8L287.8 328.1M245.4 380.1L249.0 399.5M186.7 286.1L188.6 297.3M184.2 338.6L184.7 348.1M232.4 317.7L234.9 333.0M186.6 311.0L189.5 326.9M216.8 336.2L216.9 352.0M256.4 324.4L269.0 322.4M197.4 313.7L205.1 313.7M285.3 300.9L302.8 300.4M176.2 388.3L176.5 406.8M241.6 395.0L254.0 394.9M294.7 381.1L315.0 379.7M214.0 346.8L223.1 346.9M251.1 308.2L251.3 316.1M224.6 377.7L225.2 387.5M254.4 302.0L266.8 300.3M201.6 279.3L216.8 277.0M198.8 393.1L201.0 404.8M185.0 338.3L202.4 335.2M210.5 316.9L231.6 316.6M226.0 352.6L228.3 370.6M189.1 342.5L189.7 364.0M185.4 360.7L187.8 373.6M157.7 290.5L179.2 289.5M258.2 335.2L260.1 354.5M248.7 281.6L257.4 280.6M168.4 338.2L170.1 347.5M209.3 283.0L210.6 302.3M230.2 349.4L250.5 348.6M190.8 373.0L212.4 371.9M225.5 310.5L232.6 309.8M161.2 294.7L175.8 293.4M264.0 313.9L285.9 312.9M216.4 380.8L218.0 399.8M211.0 392.9L212.6 407.0M257.9 292.3L258.7 300.5M269.9 324.3L271.6 340.2M189.8 269.3L192.1 289.5M175.3 387.0L184.2 386.2M182.6 333.9L199.4 330.9M198.3 297.5L218.9 293.7M250.8 336.0L258.3 334.7M400.2 75.0L407.5 81.9M424.1 75.4L411.4 91.8M460.1 34.2L445.0 49.1M396.8 58.9L410.2 72.2M480.4 24.3L466.6 40.4M459.5 95.8L467.0 101.6M467.3 53.5L456.3 67.0M473.0 60.6L467.5 68.4M410.0 122.8L419.9 130.6M443.7 74.6L458.0 84.8M474.9 46.2L490.0 59.5M426.0 80.1L436.3 88.2M474.1 80.2L461.9 95.6M414.9 35.8L427.9 46.2M432.9 41.6L418.6 56.7M480.7 4.2L471.0 17.6M478.2 42.1L471.1 49.7M439.5 31.6L432.7 40.7M461.4 37.7L475.1 47.1M469.7 75.1L465.0 81.7M432.2 -1.6L422.1 10.7M437.3 111.5L423.9 128.4M465.3 8.8L472.0 14.6M431.5 17.9L438.3 22.7M473.6 91.8L489.0 105.2" fill="none" stroke="#fff" stroke-width="1.3" stroke-linecap="round"/>
<path d="M242.3 231.8 L267.2 225 L317.2 245.4 L346.7 263.6 L339.9 295.4 L314.9 299.9 L285.4 288.6 L253.6 274.9 L240 268.1Z" fill="#ebe5d3"/>
<path d="M391.4 82.1 L423.3 79.1 L411.1 109.5 L392.9 109.5Z" fill="#e6dde0"/>
<path d="M220.8 339.5 L242.1 344.8 L245.9 344 L278.6 363 L263.3 403.3 L242.1 403.3 L201.8 379.8 L213.2 353.1Z" fill="#c4e2ae"/>
<path d="M222.3 350.1 L234.5 347.1 L260.3 362.3 L260.3 368.3 L248.1 362.3 L223.8 360.7Z" fill="#aad3df"/>
<path d="M339.9 315.8 L380.8 337.4 L367.2 365.8 L326.3 337.4Z" fill="#c0dfa8"/>
<path d="M296.8 252.2 L314.9 252.2 L314.9 264.7 L296.8 264.7Z" fill="#aee0c0"/>
<path d="M280.9 272.7 L310.4 272.7 L310.4 288.6 L280.9 288.6Z" fill="#d6f0c8"/>
<path d="M260.4 243.1 L274.1 243.1 L274.1 253.4 L260.4 253.4Z" fill="#c8ecb8"/>
<path d="M244.5 252.2 L253.6 252.2 L253.6 268.1 L244.5 268.1Z" fill="#c8ecb8"/>
<path d="M301.3 318.1 L324 327.2 L317.2 343.1 L301.3 336.2Z" fill="#cfe8bf"/>
<path d="M79.5 63.6 L99.9 68.1 L102.2 86.3 L90.8 99.9 L77.2 97.6Z" fill="#c8f0cc"/>
<path d="M29.5 61.3 L43.1 63.6 L43.1 77.2 L29.5 79.5Z" fill="#c9d4b0"/>
<path d="M13.6 74.9 L29.5 74.9 L29.5 90.8 L13.6 90.8Z" fill="#c4e8b0"/>
<path d="M40.9 68.1 L68.1 68.1 L68.1 95.4 L50 99.9 L40.9 86.3Z" fill="#e9dbe5"/>
<path d="M29.5 4.5 L68.1 2.3 L70.4 27.2 L56.8 56.8 L45.4 52.2 L34.1 27.2Z" fill="#e9dbe5"/>
<path d="M86.3 0 L113.5 0 L113.5 3.4 L86.3 3.4Z" fill="#a9dfe0"/>
<path d="M170.3 63.6 L188.5 59 L193 68.1 L174.8 72.7Z" fill="#c8f0cc"/>
<path d="M183.9 72.7 L199.8 70.4 L202.1 84 L186.2 86.3Z" fill="#c4e8b0"/>
<path d="M140.8 74.9 L147.6 74.9 L147.6 82.9 L140.8 82.9Z" fill="#b5e3a0"/>
<path d="M146.5 166.9 L154.4 166.9 L154.4 181.7 L146.5 181.7Z" fill="#b0e8b8"/>
<path d="M0 22.7 L13.6 20.4 L15.9 34.1 L2.3 36.3Z" fill="#eef3c0"/>
<path d="M6.8 97.6 L20.4 97.6 L20.4 111.3 L6.8 111.3Z" fill="#f1f1c0"/>
<path d="M244.5 2.3 L269.5 0 L271.8 13.6 L249.1 15.9Z" fill="#c8ecb8"/>
<path d="M274.1 63.6 L285.4 62.4 L286.5 74.9 L275.2 76.1Z" fill="#c8f0b8"/>
<path d="M312.7 93.1 L327.4 93.1 L327.4 104.5 L312.7 104.5Z" fill="#c0eab0"/>
<path d="M398.9 131.7 L435.3 134 L435.3 139.6 L398.9 137.4Z" fill="#b8e8b0"/>
<path d="M467.1 15.9 L480.7 9.1 L485 36.3 L476.1 45.4 L469.3 34.1Z" fill="#cfdcb0"/>
<path d="M458 56.8 L473.9 52.2 L480.7 86.3 L471.6 118.1 L464.8 95.4Z" fill="#e8d8e4"/>
<path d="M287.7 20.4 L299 18.2 L301.3 29.5 L290 31.8Z" fill="#e8d4e0"/>
<path d="M93.1 240.9 L106.7 240.9 L107.9 265.8 L94.2 265.8Z" fill="#c8f0cc"/>
<path d="M90.8 326 L109 326 L111.3 356.7 L90.8 358.9Z" fill="#d4e8c0"/>
<path d="M143.1 279.5 L158.9 277.2 L158.9 293.1 L145.3 294.2Z" fill="#c8f0c0"/>
<path d="M127.2 265.8 L163.5 261.3 L165.8 288.6 L136.2 290.8Z" fill="#e6d9d4"/>
<path d="M99.9 383.9 L109 383.9 L109 399.8 L99.9 399.8Z" fill="#b8eac0"/>
<path d="M22.7 295.4 L27.2 295.4 L27.2 304.5 L22.7 304.5Z" fill="#a8e4c0"/>
<path d="M302.9 321.2 L321.1 327.3 L315 337.9 L299.8 331.9Z" fill="#cfe8bf"/>
<path d="M299.8 347.1 L309 344 L310.5 353.1 L301.4 356.2Z" fill="#cfe8bf"/>
<path d="M283.1 271 L309 269.5 L309 283.2 L284.6 284.7Z" fill="#d6f0c8"/>
<path d="M48.7 28.9 L57.8 25.8 L68.4 50.2 L60.8 53.2Z" fill="#d6ccc4"/>
<path d="M50.2 76 L62.3 76 L62.3 91.2 L50.2 91.2Z" fill="#d6ccc4"/>
<path d="M246.8 238.6 L258.2 237.5 L258.6 242 L247.3 243.1Z" fill="#d6ccc4"/>
<path d="M262.7 234.1 L274.1 235.2 L273.6 239.7 L262.3 238.6Z" fill="#d6ccc4"/>
<path d="M278.6 240.9 L292.2 245.4 L291.1 249.5 L277.5 245Z" fill="#d6ccc4"/>
<path d="M253.6 256.8 L259.3 256.8 L259.3 270.4 L253.6 270.4Z" fill="#d6ccc4"/>
<path d="M262.7 254.5 L276.3 255.6 L275.9 259.5 L262.3 258.4Z" fill="#d6ccc4"/>
<path d="M314.9 252.2 L328.6 257.9 L326.3 262.4 L313.1 256.8Z" fill="#d6ccc4"/>
<path d="M319.5 265.8 L335.4 270.4 L333.6 274.9 L318.1 270.4Z" fill="#d6ccc4"/>
<path d="M314.9 277.2 L330.8 281.7 L329.7 286.3 L314 282.2Z" fill="#d6ccc4"/>
<path d="M274.1 268.1 L279.7 268.6 L279.1 278.3 L273.6 277.9Z" fill="#d6ccc4"/>
<path d="M330.8 261.3 L339.9 265.8 L338.1 269.3 L329.5 265.2Z" fill="#d6ccc4"/>
<path d="M244.5 245.4 L251.4 245.4 L251.4 251.1 L244.5 251.1Z" fill="#d6ccc4"/>
<path d="M314.9 290.8 L333.1 290.8 L332 296.5 L314.9 295.4Z" fill="#d6ccc4"/>
<path d="M-5 211.5 L0 213 L23 220.7 L46 226.7 L68 229.8 L91 230.5 L114 226.7 L137 222 L163 217 L193.4 208.5 L231.4 194.8 L254 186.5 L284.6 179.6 L300 178.5" fill="none" stroke="#aad3df" stroke-width="8"/>
<path d="M292 175 L310 174.5 L329 176.6 L371.6 181 L444.6 187 L490 192.3 L490 215.2 L444.6 208.5 L371.6 198 L329 190 L310 185 L292 182.5Z" fill="#aad3df"/>
<path d="M412.6 9.1 L426.2 27.2 L437.5 43.1 L453.4 74.9 L461.4 102.2 L463.7 127.2 L459.1 138.5 L456.8 158.9 L455.7 179.4" fill="none" stroke="#aad3df" stroke-width="4.5"/>
<path d="M358.1 118.1 L392.1 118.1 L392.1 136.2 L358.1 136.2Z" fill="#aad3df"/>
<path d="M476.6 289.7 L489.8 289.7 L489.8 336.2 L483 334 L477.3 318.1Z" fill="#aad3df"/>
<path d="M479.6 251.1 L489.8 251.1 L489.8 279.5 L480.7 278.3Z" fill="#aad3df"/>
<path d="M349 147.6 L364.9 147.6 L364.9 168 L349 168Z" fill="#c9e0ea"/>
<path d="M479.6 363.8 L444.6 401.8" fill="none" stroke="#aad3df" stroke-width="3"/>
<g fill="none" stroke-linecap="round" stroke-linejoin="round" stroke="#cbc5bf">
<path d="M92 4.6 L91.2 30.4" stroke-width="3.5"/>
<path d="M109.5 6.1 L106.4 31.9" stroke-width="3.5"/>
<path d="M135.3 9.1 L132.3 35 L126.2 47.1 L115.6 66.9" stroke-width="4.7"/>
<path d="M89.7 6.1 L133.8 6.8" stroke-width="3.5"/>
<path d="M91.2 14.4 L136.8 19.8 L163 30.4" stroke-width="3.5"/>
<path d="M92.7 22.8 L133.8 28.9" stroke-width="3.5"/>
<path d="M138.4 27.4 L163 38.8" stroke-width="3.5"/>
<path d="M98.8 44.1 L127.7 57" stroke-width="3.5"/>
<path d="M85.1 60.8 L104.9 68.4 L121.6 79.1" stroke-width="3.5"/>
<path d="M97.3 82.1 L121.6 92.7 L115.6 106.4" stroke-width="3.5"/>
<path d="M91.2 92.7 L117.1 97.3" stroke-width="3.02"/>
<path d="M149 85.1 L163 97.3" stroke-width="3.5"/>
<path d="M142.9 98.8 L158.1 112.5" stroke-width="3.5"/>
<path d="M133.8 112.5 L149 126.2" stroke-width="3.5"/>
<path d="M152 115.6 L163 106.4" stroke-width="3.5"/>
<path d="M0 98.8 L15.2 97.3 L39.5 98.8 L45.6 106.4 L45.6 121.6" stroke-width="3.74"/>
<path d="M0 129.2 L60.8 123.2" stroke-width="4.7"/>
<path d="M9.1 0 L16.7 27.4 L9.1 60.8 L0 79.1" stroke-width="3.5"/>
<path d="M16.7 27.4 L31.9 22.8" stroke-width="3.5"/>
<path d="M0 9.1 L12.2 18.2" stroke-width="3.5"/>
<path d="M73 104.9 L89.7 104.9" stroke-width="3.02"/>
<path d="M74.5 112.5 L89.7 112.5" stroke-width="3.02"/>
<path d="M73 121.6 L88.2 121.6" stroke-width="3.02"/>
<path d="M74.5 106.4 L74.5 133.8" stroke-width="3.02"/>
<path d="M66.9 69.9 L66.9 106.4" stroke-width="2.78"/>
<path d="M163 9.1 L136.8 6.1" stroke-width="3.5"/>
<path d="M146 0 L163 9.1" stroke-width="3.5"/>
<path d="M3 91.2 L3 79.1 L15.2 76 L27.4 76" stroke-width="2.78"/>
<path d="M30.4 85.1 L30.4 97.3" stroke-width="2.78"/>
<path d="M15.2 106.4 L15.2 127.7" stroke-width="2.78"/>
<path d="M50.2 66.9 L76 69.9" stroke-width="3.02"/>
<path d="M118.6 45.6 L106.4 63.9" stroke-width="3.02"/>
<path d="M127.7 124.7 L136.8 133.8" stroke-width="3.5"/>
<path d="M117.1 115.6 L130.8 106.4 L142.9 115.6" stroke-width="3.02"/>
<path d="M193.4 0 L216.2 24.3 L236 45.6 L248.1 62.3" stroke-width="4.7"/>
<path d="M248.1 0 L217.7 24.3 L190.4 45.6 L167.6 65.4" stroke-width="4.7"/>
<path d="M208.6 35 L234.5 66.9" stroke-width="3.5"/>
<path d="M201 41.1 L225.3 71.5" stroke-width="3.02"/>
<path d="M242.1 50.2 L260.3 41.1" stroke-width="3.5"/>
<path d="M234.5 40.3 L257.3 28.9" stroke-width="3.5"/>
<path d="M269.4 0 L280.1 15.2 L289.2 35" stroke-width="3.98"/>
<path d="M267.9 19 L315 -3" stroke-width="3.5"/>
<path d="M281.6 53.2 L326 39.5" stroke-width="3.5"/>
<path d="M277 77.5 L326 60.8" stroke-width="4.7"/>
<path d="M284.6 91.2 L326 76" stroke-width="3.5"/>
<path d="M309 114 L326 106.4" stroke-width="3.5"/>
<path d="M295.3 121.6 L326 112.5" stroke-width="3.98"/>
<path d="M289.2 59.3 L299.8 91.2 L309 115.6" stroke-width="3.5"/>
<path d="M313.5 30.4 L326 50.2" stroke-width="3.5"/>
<path d="M251.2 65.4 L263.3 91.2 L272.5 106.4 L281.6 133.8" stroke-width="3.5"/>
<path d="M211.7 89.7 L216.2 106.4 L223.8 133.8" stroke-width="5.3"/>
<path d="M226.9 130.8 L289.2 121.6" stroke-width="3.5"/>
<path d="M242.1 91.2 L248.1 115.6 L254.2 133.8" stroke-width="3.02"/>
<path d="M315 0 L326 13.7" stroke-width="3.5"/>
<path d="M296.8 0 L309 16.7" stroke-width="3.5"/>
<path d="M299.8 50.2 L309 45.6 L315 63.9" stroke-width="3.02"/>
<path d="M163 45.6 L172.1 38" stroke-width="3.5"/>
<path d="M185.8 0 L172.1 12.2" stroke-width="3.5"/>
<path d="M163 13.7 L172.1 22.8" stroke-width="3.02"/>
<path d="M187.3 115.6 L199.5 133.8" stroke-width="3.5"/>
<path d="M163 91.2 L178.2 106.4" stroke-width="3.02"/>
<path d="M302.9 85.1 L324.2 79.1" stroke-width="3.02"/>
<path d="M305.9 98.8 L326 91.2" stroke-width="3.02"/>
<path d="M335.1 16.7 L345.8 50.2 L356.4 73 L361 85.1" stroke-width="4.7"/>
<path d="M326 60.8 L377.7 44.1" stroke-width="4.7"/>
<path d="M345.8 35.7 L376.2 25.8" stroke-width="3.5"/>
<path d="M326 94.3 L361 79.1" stroke-width="3.5"/>
<path d="M326 76 L351.8 66.9" stroke-width="3.5"/>
<path d="M353.4 4.6 L376.2 9.1 L394.4 15.2" stroke-width="3.5"/>
<path d="M376.2 9.1 L386.8 0" stroke-width="3.5"/>
<path d="M383.8 19.8 L397.5 9.1 L408.1 4.6" stroke-width="3.5"/>
<path d="M359.4 25.8 L376.2 13.7" stroke-width="3.5"/>
<path d="M362.5 69.9 L371.6 57.8 L391.4 45.6" stroke-width="3.5"/>
<path d="M397.5 121.6 L418.7 94.3 L432.4 79.1 L441.6 71.5" stroke-width="4.7"/>
<path d="M430.9 82.1 L455.2 91.2" stroke-width="3.5"/>
<path d="M432.4 66.9 L447.6 76" stroke-width="3.5"/>
<path d="M399 118.6 L452.2 123.2" stroke-width="3.5"/>
<path d="M455.2 44.1 L478 19.8 L487.2 15.2" stroke-width="3.5"/>
<path d="M456.8 36.5 L468.9 25.8" stroke-width="3.5"/>
<path d="M423.3 9.1 L432.4 3" stroke-width="3.5"/>
<path d="M426.3 16.7 L447.6 0" stroke-width="3.5"/>
<path d="M326 38 L335.1 35" stroke-width="3.5"/>
<path d="M329 106.4 L344.2 98.8" stroke-width="3.5"/>
<path d="M332.1 0 L341.2 9.1" stroke-width="3.5"/>
<path d="M341.2 0 L326 9.1" stroke-width="3.02"/>
<path d="M368.6 38 L386.8 30.4" stroke-width="3.02"/>
<path d="M391.4 45.6 L405.1 53.2" stroke-width="3.02"/>
<path d="M441.6 71.5 L441.6 94.3 L453.7 106.4" stroke-width="3.02"/>
<path d="M417.2 133.8 L420.3 126.2" stroke-width="3.5"/>
<path d="M430.9 133.8 L432.4 124.7" stroke-width="3.5"/>
<path d="M446.1 100.3 L462.8 97.3" stroke-width="3.02"/>
<path d="M21.3 146.2 L18.2 179.6 L15.2 207" stroke-width="3.5"/>
<path d="M35 149.2 L33.4 179.6 L28.9 207" stroke-width="3.5"/>
<path d="M45.6 143.1 L42.6 164.4" stroke-width="3.5"/>
<path d="M71.5 138.6 L76 179.6 L82.1 200.9 L85.1 220.7" stroke-width="3.98"/>
<path d="M83.6 138.6 L86.7 156.8 L97.3 194.8 L98.8 216.1" stroke-width="3.5"/>
<path d="M97.3 138.6 L98.8 172" stroke-width="3.5"/>
<path d="M60.8 149.2 L71.5 149.2" stroke-width="3.02"/>
<path d="M60.8 156.8 L71.5 156.8" stroke-width="3.02"/>
<path d="M60.8 164.4 L71.5 164.4" stroke-width="3.02"/>
<path d="M60.8 172 L73 172" stroke-width="3.02"/>
<path d="M73 155.3 L106.4 156.8" stroke-width="3.02"/>
<path d="M91.2 175.1 L120.1 170.5" stroke-width="3.5"/>
<path d="M18.2 179.6 L56.3 179.6" stroke-width="3.5"/>
<path d="M0 184.2 L16.7 182.7" stroke-width="3.5"/>
<path d="M15.2 161.4 L35 162.9" stroke-width="3.5"/>
<path d="M7.6 197.9 L30.4 202.4 L48.7 207" stroke-width="3.5"/>
<path d="M138.4 138.6 L146 179.6 L152 210" stroke-width="3.5"/>
<path d="M147.5 138.6 L158.1 184.2 L163 207" stroke-width="3.5"/>
<path d="M87.4 225.2 L89.7 237.4" stroke-width="5.9"/>
<path d="M138.4 216.1 L141.4 231.3" stroke-width="5.9"/>
<path d="M89.7 237.4 L91.2 267.8" stroke-width="4.7"/>
<path d="M141.4 231.3 L146 252.6" stroke-width="4.7"/>
<path d="M112.5 240.4 L136.8 235.9 L163 232.8" stroke-width="3.5"/>
<path d="M115.6 246.5 L136.8 243.5 L152 240.4" stroke-width="3.5"/>
<path d="M133.8 237.4 L136.8 255.6" stroke-width="3.5"/>
<path d="M0 231.3 L9.1 234.3 L6.1 240.4 L0 243.5" stroke-width="3.5"/>
<path d="M30.4 231.3 L27.4 249.6" stroke-width="3.5"/>
<path d="M0 255.6 L21.3 251.1 L89.7 251.1" stroke-width="5.3"/>
<path d="M60.8 260.2 L89.7 260.2" stroke-width="3.5"/>
<path d="M22.8 155.3 L45.6 153.8" stroke-width="3.02"/>
<path d="M3 149.2 L19.8 152.2" stroke-width="3.02"/>
<path d="M0 172 L18.2 172" stroke-width="3.02"/>
<path d="M97.3 216.1 L115.6 210 L163 207" stroke-width="3.02"/>
<path d="M73 185.7 L94.3 184.2" stroke-width="3.02"/>
<path d="M100.3 203.9 L112.5 202.4" stroke-width="3.02"/>
<path d="M0 200.9 L15.2 205.5" stroke-width="3.02"/>
<path d="M45.6 200.9 L48.7 213.1" stroke-width="3.02"/>
<path d="M163 200.9 L193.4 191.8 L229.9 178.1" stroke-width="3.5"/>
<path d="M204.1 162.1 L229.9 158.3" stroke-width="3.5"/>
<path d="M254.2 173.5 L284.6 167.4" stroke-width="3.5"/>
<path d="M263.3 200.9 L284.6 200.9" stroke-width="3.5"/>
<path d="M264.9 218.4 L326 218.4" stroke-width="4.7"/>
<path d="M205.6 207 L208.6 246.5" stroke-width="3.5"/>
<path d="M222.3 207 L223.8 228.3" stroke-width="3.5"/>
<path d="M193.4 213.1 L198 246.5" stroke-width="3.5"/>
<path d="M229.9 205.5 L231.4 225.2" stroke-width="3.02"/>
<path d="M204.1 223.7 L236 220.7 L257.3 219.1" stroke-width="3.5"/>
<path d="M214.7 232.8 L234.5 231.3" stroke-width="3.5"/>
<path d="M184.3 184.2 L190.4 197.9" stroke-width="3.02"/>
<path d="M213.2 176.6 L217.7 188.7" stroke-width="3.02"/>
<path d="M223.8 134 L229.9 159.8 L237.5 194.8" stroke-width="7.1"/>
<path d="M249.7 134 L255.7 153.8 L261.8 194.8 L263.3 220.7" stroke-width="3.02"/>
<path d="M163 213.1 L193.4 204.7 L231.4 191" stroke-width="2.9"/>
<path d="M263.3 184.2 L284.6 178.1" stroke-width="2.9"/>
<path d="M257.3 143.1 L284.6 137" stroke-width="3.5"/>
<path d="M260.3 153.8 L289.2 147.7" stroke-width="3.02"/>
<path d="M269.4 134 L272.5 149.2" stroke-width="3.02"/>
<path d="M296.8 231.3 L326 243.5" stroke-width="3.02"/>
<path d="M299.8 161.4 L321.1 161.4" stroke-width="3.02"/>
<path d="M299.8 170.5 L322.6 170.5" stroke-width="3.5"/>
<path d="M287.7 207 L326 207" stroke-width="3.02"/>
<path d="M163 194.8 L181.2 190.3" stroke-width="3.02"/>
<path d="M172.1 172 L176.7 197.9" stroke-width="3.02"/>
<path d="M193.4 140.1 L213.2 134" stroke-width="3.02"/>
<path d="M163 223.7 L175.2 222.2" stroke-width="3.02"/>
<path d="M248.1 254.1 L278.6 254.1" stroke-width="2.78"/>
<path d="M260.3 240.4 L278.6 240.4" stroke-width="2.78"/>
<path d="M257.3 243.5 L257.3 264.8" stroke-width="2.78"/>
<path d="M394.4 134 L391.4 176.6" stroke-width="4.7"/>
<path d="M453 127.9 L449.2 182.7" stroke-width="4.94"/>
<path d="M367.1 149.2 L365.5 172" stroke-width="3.02"/>
<path d="M383.8 150.7 L382.3 172" stroke-width="3.02"/>
<path d="M376.2 164.4 L417.2 169" stroke-width="3.02"/>
<path d="M342.7 197.9 L341.2 219.1" stroke-width="3.5"/>
<path d="M389.9 208.5 L386.8 231.3" stroke-width="3.5"/>
<path d="M405.1 210 L403.5 228.3" stroke-width="3.5"/>
<path d="M326 207 L364 213.1" stroke-width="3.5"/>
<path d="M330.6 225.2 L329 240.4" stroke-width="3.5"/>
<path d="M388.3 219.1 L417.2 223.7" stroke-width="3.5"/>
<path d="M459.8 213.1 L487.2 216.9" stroke-width="3.98"/>
<path d="M458.3 225.2 L487.2 228.3" stroke-width="3.5"/>
<path d="M467.4 219.1 L465.9 240.4 L462.8 267.8" stroke-width="3.5"/>
<path d="M456.8 249.6 L487.2 252.6" stroke-width="3.5"/>
<path d="M435.5 243.5 L432.4 267.8" stroke-width="3.5"/>
<path d="M371.6 231.3 L435.5 243.5" stroke-width="4.94"/>
<path d="M326 234.3 L356.4 240.4" stroke-width="3.5"/>
<path d="M411.1 245 L386.8 240.4" stroke-width="3.02"/>
<path d="M478 216.1 L476.5 267.8" stroke-width="3.02"/>
<path d="M405.1 143.1 L447.6 149.2" stroke-width="2.78"/>
<path d="M423.3 164.4 L447.6 167.4" stroke-width="2.78"/>
<path d="M462.8 169 L484.9 172" stroke-width="3.02"/>
<path d="M472 149.2 L470.4 184.2" stroke-width="3.02"/>
<path d="M335.1 231.3 L333.6 246.5" stroke-width="3.02"/>
<path d="M345.8 232.8 L344.2 249.6" stroke-width="3.02"/>
<path d="M41.1 277.1 L57.8 307.5 L71.5 344" stroke-width="4.7"/>
<path d="M6.1 281.7 L18.2 325.8 L19.8 331.9" stroke-width="4.7"/>
<path d="M0 312.1 L45.6 301.4 L82.1 295.4" stroke-width="3.98"/>
<path d="M0 324.3 L53.2 313.6" stroke-width="3.5"/>
<path d="M0 299.9 L30.4 293.8" stroke-width="3.5"/>
<path d="M24.3 280.2 L30.4 313.6" stroke-width="3.5"/>
<path d="M30.4 295.4 L38 319.7" stroke-width="3.02"/>
<path d="M89.7 296.9 L111 296.9" stroke-width="3.5"/>
<path d="M89.7 304.5 L112.5 304.5" stroke-width="4.7"/>
<path d="M89.7 322 L136.8 321.2 L163 316.7" stroke-width="5.3"/>
<path d="M113.3 274.1 L112.5 321.2 L121.6 353.1 L123.2 366.8" stroke-width="3.98"/>
<path d="M130.8 287.8 L136.8 313.6 L146 318.2" stroke-width="3.5"/>
<path d="M115.6 286.2 L130.8 287.8 L152 306 L146 315.1 L133.8 319.7" stroke-width="3.5"/>
<path d="M121.6 347.1 L158.1 344" stroke-width="3.5"/>
<path d="M123.2 365.3 L156.6 365.3" stroke-width="3.5"/>
<path d="M85.1 347.1 L103.4 353.1 L104.9 365.3" stroke-width="3.5"/>
<path d="M0 372.9 L44.1 372.9 L53.2 386.6 L54.7 401.8" stroke-width="4.7"/>
<path d="M4.6 359.2 L15.2 401.8" stroke-width="3.5"/>
<path d="M22.8 360.7 L22.8 372.9" stroke-width="3.5"/>
<path d="M0 385.1 L53.2 389.6" stroke-width="3.5"/>
<path d="M73 356.2 L54.7 383.6" stroke-width="3.5"/>
<path d="M86.7 365.3 L104.9 365.3" stroke-width="3.5"/>
<path d="M88.2 374.4 L106.4 374.4" stroke-width="3.02"/>
<path d="M91.2 380.5 L91.2 401.8" stroke-width="3.02"/>
<path d="M104.9 365.3 L106.4 401.8" stroke-width="3.5"/>
<path d="M124.7 383.6 L126.2 401.8" stroke-width="3.02"/>
<path d="M146 382 L147.5 401.8" stroke-width="3.02"/>
<path d="M51.7 274.1 L73 292.3 L82.1 313.6" stroke-width="3.5"/>
<path d="M63.9 290.8 L82.1 283.2" stroke-width="3.5"/>
<path d="M0 290.8 L6.1 283.2" stroke-width="3.5"/>
<path d="M45.6 321.2 L63.9 318.2" stroke-width="3.02"/>
<path d="M18.2 336.4 L45.6 339.5 L57.8 344" stroke-width="3.02"/>
<path d="M0 344 L18.2 336.4" stroke-width="3.02"/>
<path d="M30.4 374.4 L30.4 386.6" stroke-width="3.02"/>
<path d="M0 398.8 L15.2 389.6" stroke-width="3.02"/>
<path d="M114 295.4 L130.8 298.4" stroke-width="3.02"/>
<path d="M115.6 310.6 L133.8 310.6" stroke-width="3.02"/>
<path d="M133.8 331.9 L158.1 334.9" stroke-width="3.02"/>
<path d="M141.4 319.7 L142.9 344" stroke-width="3.02"/>
<path d="M152 268 L153.6 286.2" stroke-width="3.02"/>
<path d="M133.8 268 L136.8 283.2" stroke-width="3.02"/>
<path d="M326 331.9 L309 359.2 L292.2 401.8" stroke-width="4.7"/>
<path d="M252.7 309.1 L281.6 316.7" stroke-width="5.3"/>
<path d="M239 295.4 L248.1 296.9 L286.2 303" stroke-width="3.5"/>
<path d="M269.4 287.8 L266.4 307.5" stroke-width="3.5"/>
<path d="M280.1 374.4 L299.8 382" stroke-width="4.7"/>
<path d="M326 353.1 L315 359.2" stroke-width="3.5"/>
<path d="M296.8 344 L324.2 354.7" stroke-width="3.02"/>
<path d="M167.6 319.7 L178.2 310.6 L188.8 313.6 L190.4 322.7 L178.2 344 L175.2 377.5" stroke-width="4.7"/>
<path d="M163 319.7 L178.2 321.2" stroke-width="3.98"/>
<path d="M166 307.5 L188.8 313.6" stroke-width="3.98"/>
<path d="M190.4 313.6 L207.1 277.1 L216.2 274.1 L222.3 278.6 L208.6 313.6 L199.5 322.7" stroke-width="3.98"/>
<path d="M163 341 L211.7 353.1" stroke-width="3.5"/>
<path d="M188.8 339.5 L201 347.1" stroke-width="3.02"/>
<path d="M163 328.8 L172.1 331.9 L178.2 344" stroke-width="3.98"/>
<path d="M257.3 325.8 L278.6 331.9" stroke-width="3.02"/>
<path d="M260.3 339.5 L272.5 342.5" stroke-width="3.02"/>
<path d="M296.8 306 L315 313.6" stroke-width="3.02"/>
<path d="M293.8 318.2 L304.4 321.2" stroke-width="3.02"/>
<path d="M281.6 389.6 L296.8 395.7" stroke-width="3.02"/>
<path d="M304.4 374.4 L326 383.6" stroke-width="3.02"/>
<path d="M163 359.2 L175.2 360.7" stroke-width="3.02"/>
<path d="M182.8 385.1 L185.8 401.8" stroke-width="3.02"/>
<path d="M248.1 283.2 L252.7 284.7" stroke-width="3.02"/>
<path d="M326 339.5 L371.6 366.8 L417.2 397.2 L423.3 401.8" stroke-width="5.3"/>
<path d="M335.1 313.6 L326 334.9" stroke-width="4.7"/>
<path d="M371.6 366.8 L356.4 401.8" stroke-width="4.7"/>
<path d="M380.7 336.4 L373.1 365.3" stroke-width="3.5"/>
<path d="M386.8 268 L391.4 304.5" stroke-width="4.7"/>
<path d="M447.6 281.7 L443.1 334.9" stroke-width="4.7"/>
<path d="M394.4 293.8 L444.6 293.8" stroke-width="3.02"/>
<path d="M414.2 298.4 L432.4 312.1" stroke-width="3.02"/>
<path d="M399 353.1 L423.3 325.8 L429.4 313.6" stroke-width="3.5"/>
<path d="M391.4 365.3 L411.1 374.4 L432.4 374.4" stroke-width="3.02"/>
<path d="M417.2 353.1 L438.5 365.3" stroke-width="3.02"/>
<path d="M392.9 359.2 L435.5 383.6" stroke-width="3.5"/>
<path d="M470.4 362.3 L441.6 401.8" stroke-width="4.7"/>
<path d="M423.3 356.2 L432.4 347.1" stroke-width="3.02"/>
<path d="M432.4 365.3 L444.6 353.1" stroke-width="3.02"/>
<path d="M447.6 374.4 L458.3 362.3" stroke-width="3.02"/>
<path d="M326 353.1 L362.5 374.4" stroke-width="3.02"/>
<path d="M341.2 365.3 L326 389.6" stroke-width="3.02"/>
<path d="M361 374.4 L345.8 401.8" stroke-width="3.02"/>
<path d="M374.7 383.6 L394.4 392.7" stroke-width="3.02"/>
<path d="M417.2 268 L415.7 290.8" stroke-width="3.02"/>
<path d="M432.4 274.1 L430.9 301.4" stroke-width="3.02"/>
<path d="M462.8 283.2 L459.8 318.2" stroke-width="3.02"/>
<path d="M411.1 316.7 L399 337.9" stroke-width="3.02"/>
<path d="M345.8 316.7 L374.7 330.3" stroke-width="2.78"/>
<path d="M432.4 386.6 L417.2 401.8" stroke-width="3.02"/>
<path d="M459.8 383.6 L472 395.7" stroke-width="3.02"/>
<path d="M386.8 374.4 L376.2 398.8" stroke-width="3.02"/>
<path d="M364 277.1 L361 298.4" stroke-width="3.02"/>
<path d="M389.9 331.9 L408.1 341" stroke-width="3.02"/>
</g>
<g fill="none" stroke-linecap="round" stroke-linejoin="round" stroke="#dddde8">
<path d="M217.7 100.3 L274 80.6" stroke-width="2"/>
<path d="M120.1 170.5 L163 159.1" stroke-width="2"/>
<path d="M74.5 160.2 L106.4 156.8" stroke-width="1.6"/>
<path d="M121.6 138.6 L129.2 179.6 L135.3 210" stroke-width="2"/>
<path d="M6.1 149.2 L9.1 164.4 L16.7 164.4" stroke-width="1.6"/>
<path d="M115.6 249.6 L126.2 246.5 L129.2 255.6" stroke-width="1.4"/>
<path d="M163 158.3 L201 149.2 L248.1 137" stroke-width="2.2"/>
<path d="M178.2 156.8 L182.8 176.6" stroke-width="1.6"/>
<path d="M185.8 140.1 L190.4 152.2" stroke-width="1.6"/>
<path d="M163 143.1 L172.1 149.2" stroke-width="1.6"/>
<path d="M166 240.4 L181.2 238.9 L193.4 240.4" stroke-width="1.6"/>
<path d="M163 231.3 L193.4 228.3 L223.8 222.2" stroke-width="1.6"/>
<path d="M178.2 231.3 L179.7 249.6" stroke-width="1.4"/>
<path d="M187.3 231.3 L188.8 249.6" stroke-width="1.4"/>
<path d="M201 134 L207.1 152.2" stroke-width="1.4"/>
<path d="M167.6 263.2 L169.1 249.6" stroke-width="1.4"/>
<path d="M348.8 149.2 L347.3 170.5" stroke-width="1.6"/>
<path d="M420.3 155.3 L418.7 178.1" stroke-width="1.6"/>
<path d="M430.9 213.1 L427.9 238.9" stroke-width="1.6"/>
<path d="M421.8 210 L417.2 240.4 L411.1 267.8" stroke-width="2"/>
<path d="M181.2 274.1 L236 274.1" stroke-width="2"/>
<path d="M190.4 286.2 L248.1 301.4" stroke-width="2"/>
<path d="M191.9 315.1 L245.1 312.1" stroke-width="2"/>
<path d="M191.9 324.3 L220.8 331.9" stroke-width="2"/>
<path d="M228.4 272.6 L232.9 283.2 L229.9 295.4 L220.8 331.9" stroke-width="2"/>
<path d="M237.5 298.4 L237.5 313.6" stroke-width="2"/>
<path d="M229.9 316.7 L229.9 325.8" stroke-width="2"/>
<path d="M207.1 287.8 L201 313.6" stroke-width="1.6"/>
<path d="M408.1 272.6 L402 309.1 L386.8 341" stroke-width="2"/>
</g>
<g fill="none" stroke-linecap="round" stroke-linejoin="round" stroke="#fff">
<path d="M92 4.6 L91.2 30.4" stroke-width="2.5"/>
<path d="M109.5 6.1 L106.4 31.9" stroke-width="2.5"/>
<path d="M135.3 9.1 L132.3 35 L126.2 47.1 L115.6 66.9" stroke-width="3.7"/>
<path d="M89.7 6.1 L133.8 6.8" stroke-width="2.5"/>
<path d="M91.2 14.4 L136.8 19.8 L163 30.4" stroke-width="2.5"/>
<path d="M92.7 22.8 L133.8 28.9" stroke-width="2.5"/>
<path d="M138.4 27.4 L163 38.8" stroke-width="2.5"/>
<path d="M98.8 44.1 L127.7 57" stroke-width="2.5"/>
<path d="M85.1 60.8 L104.9 68.4 L121.6 79.1" stroke-width="2.5"/>
<path d="M97.3 82.1 L121.6 92.7 L115.6 106.4" stroke-width="2.5"/>
<path d="M91.2 92.7 L117.1 97.3" stroke-width="2.02"/>
<path d="M149 85.1 L163 97.3" stroke-width="2.5"/>
<path d="M142.9 98.8 L158.1 112.5" stroke-width="2.5"/>
<path d="M133.8 112.5 L149 126.2" stroke-width="2.5"/>
<path d="M152 115.6 L163 106.4" stroke-width="2.5"/>
<path d="M0 98.8 L15.2 97.3 L39.5 98.8 L45.6 106.4 L45.6 121.6" stroke-width="2.74"/>
<path d="M0 129.2 L60.8 123.2" stroke-width="3.7"/>
<path d="M9.1 0 L16.7 27.4 L9.1 60.8 L0 79.1" stroke-width="2.5"/>
<path d="M16.7 27.4 L31.9 22.8" stroke-width="2.5"/>
<path d="M0 9.1 L12.2 18.2" stroke-width="2.5"/>
<path d="M73 104.9 L89.7 104.9" stroke-width="2.02"/>
<path d="M74.5 112.5 L89.7 112.5" stroke-width="2.02"/>
<path d="M73 121.6 L88.2 121.6" stroke-width="2.02"/>
<path d="M74.5 106.4 L74.5 133.8" stroke-width="2.02"/>
<path d="M66.9 69.9 L66.9 106.4" stroke-width="1.78"/>
<path d="M163 9.1 L136.8 6.1" stroke-width="2.5"/>
<path d="M146 0 L163 9.1" stroke-width="2.5"/>
<path d="M3 91.2 L3 79.1 L15.2 76 L27.4 76" stroke-width="1.78"/>
<path d="M30.4 85.1 L30.4 97.3" stroke-width="1.78"/>
<path d="M15.2 106.4 L15.2 127.7" stroke-width="1.78"/>
<path d="M50.2 66.9 L76 69.9" stroke-width="2.02"/>
<path d="M118.6 45.6 L106.4 63.9" stroke-width="2.02"/>
<path d="M127.7 124.7 L136.8 133.8" stroke-width="2.5"/>
<path d="M117.1 115.6 L130.8 106.4 L142.9 115.6" stroke-width="2.02"/>
<path d="M193.4 0 L216.2 24.3 L236 45.6 L248.1 62.3" stroke-width="3.7"/>
<path d="M248.1 0 L217.7 24.3 L190.4 45.6 L167.6 65.4" stroke-width="3.7"/>
<path d="M208.6 35 L234.5 66.9" stroke-width="2.5"/>
<path d="M201 41.1 L225.3 71.5" stroke-width="2.02"/>
<path d="M242.1 50.2 L260.3 41.1" stroke-width="2.5"/>
<path d="M234.5 40.3 L257.3 28.9" stroke-width="2.5"/>
<path d="M269.4 0 L280.1 15.2 L289.2 35" stroke-width="2.98"/>
<path d="M267.9 19 L315 -3" stroke-width="2.5"/>
<path d="M281.6 53.2 L326 39.5" stroke-width="2.5"/>
<path d="M277 77.5 L326 60.8" stroke-width="3.7"/>
<path d="M284.6 91.2 L326 76" stroke-width="2.5"/>
<path d="M309 114 L326 106.4" stroke-width="2.5"/>
<path d="M295.3 121.6 L326 112.5" stroke-width="2.98"/>
<path d="M289.2 59.3 L299.8 91.2 L309 115.6" stroke-width="2.5"/>
<path d="M313.5 30.4 L326 50.2" stroke-width="2.5"/>
<path d="M251.2 65.4 L263.3 91.2 L272.5 106.4 L281.6 133.8" stroke-width="2.5"/>
<path d="M211.7 89.7 L216.2 106.4 L223.8 133.8" stroke-width="4.3"/>
<path d="M226.9 130.8 L289.2 121.6" stroke-width="2.5"/>
<path d="M242.1 91.2 L248.1 115.6 L254.2 133.8" stroke-width="2.02"/>
<path d="M315 0 L326 13.7" stroke-width="2.5"/>
<path d="M296.8 0 L309 16.7" stroke-width="2.5"/>
<path d="M299.8 50.2 L309 45.6 L315 63.9" stroke-width="2.02"/>
<path d="M163 45.6 L172.1 38" stroke-width="2.5"/>
<path d="M185.8 0 L172.1 12.2" stroke-width="2.5"/>
<path d="M163 13.7 L172.1 22.8" stroke-width="2.02"/>
<path d="M187.3 115.6 L199.5 133.8" stroke-width="2.5"/>
<path d="M163 91.2 L178.2 106.4" stroke-width="2.02"/>
<path d="M302.9 85.1 L324.2 79.1" stroke-width="2.02"/>
<path d="M305.9 98.8 L326 91.2" stroke-width="2.02"/>
<path d="M335.1 16.7 L345.8 50.2 L356.4 73 L361 85.1" stroke-width="3.7"/>
<path d="M326 60.8 L377.7 44.1" stroke-width="3.7"/>
<path d="M345.8 35.7 L376.2 25.8" stroke-width="2.5"/>
<path d="M326 94.3 L361 79.1" stroke-width="2.5"/>
<path d="M326 76 L351.8 66.9" stroke-width="2.5"/>
<path d="M353.4 4.6 L376.2 9.1 L394.4 15.2" stroke-width="2.5"/>
<path d="M376.2 9.1 L386.8 0" stroke-width="2.5"/>
<path d="M383.8 19.8 L397.5 9.1 L408.1 4.6" stroke-width="2.5"/>
<path d="M359.4 25.8 L376.2 13.7" stroke-width="2.5"/>
<path d="M362.5 69.9 L371.6 57.8 L391.4 45.6" stroke-width="2.5"/>
<path d="M397.5 121.6 L418.7 94.3 L432.4 79.1 L441.6 71.5" stroke-width="3.7"/>
<path d="M430.9 82.1 L455.2 91.2" stroke-width="2.5"/>
<path d="M432.4 66.9 L447.6 76" stroke-width="2.5"/>
<path d="M399 118.6 L452.2 123.2" stroke-width="2.5"/>
<path d="M455.2 44.1 L478 19.8 L487.2 15.2" stroke-width="2.5"/>
<path d="M456.8 36.5 L468.9 25.8" stroke-width="2.5"/>
<path d="M423.3 9.1 L432.4 3" stroke-width="2.5"/>
<path d="M426.3 16.7 L447.6 0" stroke-width="2.5"/>
<path d="M326 38 L335.1 35" stroke-width="2.5"/>
<path d="M329 106.4 L344.2 98.8" stroke-width="2.5"/>
<path d="M332.1 0 L341.2 9.1" stroke-width="2.5"/>
<path d="M341.2 0 L326 9.1" stroke-width="2.02"/>
<path d="M368.6 38 L386.8 30.4" stroke-width="2.02"/>
<path d="M391.4 45.6 L405.1 53.2" stroke-width="2.02"/>
<path d="M441.6 71.5 L441.6 94.3 L453.7 106.4" stroke-width="2.02"/>
<path d="M417.2 133.8 L420.3 126.2" stroke-width="2.5"/>
<path d="M430.9 133.8 L432.4 124.7" stroke-width="2.5"/>
<path d="M446.1 100.3 L462.8 97.3" stroke-width="2.02"/>
<path d="M21.3 146.2 L18.2 179.6 L15.2 207" stroke-width="2.5"/>
<path d="M35 149.2 L33.4 179.6 L28.9 207" stroke-width="2.5"/>
<path d="M45.6 143.1 L42.6 164.4" stroke-width="2.5"/>
<path d="M71.5 138.6 L76 179.6 L82.1 200.9 L85.1 220.7" stroke-width="2.98"/>
<path d="M83.6 138.6 L86.7 156.8 L97.3 194.8 L98.8 216.1" stroke-width="2.5"/>
<path d="M97.3 138.6 L98.8 172" stroke-width="2.5"/>
<path d="M60.8 149.2 L71.5 149.2" stroke-width="2.02"/>
<path d="M60.8 156.8 L71.5 156.8" stroke-width="2.02"/>
<path d="M60.8 164.4 L71.5 164.4" stroke-width="2.02"/>
<path d="M60.8 172 L73 172" stroke-width="2.02"/>
<path d="M73 155.3 L106.4 156.8" stroke-width="2.02"/>
<path d="M91.2 175.1 L120.1 170.5" stroke-width="2.5"/>
<path d="M18.2 179.6 L56.3 179.6" stroke-width="2.5"/>
<path d="M0 184.2 L16.7 182.7" stroke-width="2.5"/>
<path d="M15.2 161.4 L35 162.9" stroke-width="2.5"/>
<path d="M7.6 197.9 L30.4 202.4 L48.7 207" stroke-width="2.5"/>
<path d="M138.4 138.6 L146 179.6 L152 210" stroke-width="2.5"/>
<path d="M147.5 138.6 L158.1 184.2 L163 207" stroke-width="2.5"/>
<path d="M87.4 225.2 L89.7 237.4" stroke-width="4.9"/>
<path d="M138.4 216.1 L141.4 231.3" stroke-width="4.9"/>
<path d="M89.7 237.4 L91.2 267.8" stroke-width="3.7"/>
<path d="M141.4 231.3 L146 252.6" stroke-width="3.7"/>
<path d="M112.5 240.4 L136.8 235.9 L163 232.8" stroke-width="2.5"/>
<path d="M115.6 246.5 L136.8 243.5 L152 240.4" stroke-width="2.5"/>
<path d="M133.8 237.4 L136.8 255.6" stroke-width="2.5"/>
<path d="M0 231.3 L9.1 234.3 L6.1 240.4 L0 243.5" stroke-width="2.5"/>
<path d="M30.4 231.3 L27.4 249.6" stroke-width="2.5"/>
<path d="M0 255.6 L21.3 251.1 L89.7 251.1" stroke-width="4.3"/>
<path d="M60.8 260.2 L89.7 260.2" stroke-width="2.5"/>
<path d="M22.8 155.3 L45.6 153.8" stroke-width="2.02"/>
<path d="M3 149.2 L19.8 152.2" stroke-width="2.02"/>
<path d="M0 172 L18.2 172" stroke-width="2.02"/>
<path d="M97.3 216.1 L115.6 210 L163 207" stroke-width="2.02"/>
<path d="M73 185.7 L94.3 184.2" stroke-width="2.02"/>
<path d="M100.3 203.9 L112.5 202.4" stroke-width="2.02"/>
<path d="M0 200.9 L15.2 205.5" stroke-width="2.02"/>
<path d="M45.6 200.9 L48.7 213.1" stroke-width="2.02"/>
<path d="M163 200.9 L193.4 191.8 L229.9 178.1" stroke-width="2.5"/>
<path d="M204.1 162.1 L229.9 158.3" stroke-width="2.5"/>
<path d="M254.2 173.5 L284.6 167.4" stroke-width="2.5"/>
<path d="M263.3 200.9 L284.6 200.9" stroke-width="2.5"/>
<path d="M264.9 218.4 L326 218.4" stroke-width="3.7"/>
<path d="M205.6 207 L208.6 246.5" stroke-width="2.5"/>
<path d="M222.3 207 L223.8 228.3" stroke-width="2.5"/>
<path d="M193.4 213.1 L198 246.5" stroke-width="2.5"/>
<path d="M229.9 205.5 L231.4 225.2" stroke-width="2.02"/>
<path d="M204.1 223.7 L236 220.7 L257.3 219.1" stroke-width="2.5"/>
<path d="M214.7 232.8 L234.5 231.3" stroke-width="2.5"/>
<path d="M184.3 184.2 L190.4 197.9" stroke-width="2.02"/>
<path d="M213.2 176.6 L217.7 188.7" stroke-width="2.02"/>
<path d="M223.8 134 L229.9 159.8 L237.5 194.8" stroke-width="6.1"/>
<path d="M249.7 134 L255.7 153.8 L261.8 194.8 L263.3 220.7" stroke-width="2.02"/>
<path d="M163 213.1 L193.4 204.7 L231.4 191" stroke-width="1.9"/>
<path d="M263.3 184.2 L284.6 178.1" stroke-width="1.9"/>
<path d="M257.3 143.1 L284.6 137" stroke-width="2.5"/>
<path d="M260.3 153.8 L289.2 147.7" stroke-width="2.02"/>
<path d="M269.4 134 L272.5 149.2" stroke-width="2.02"/>
<path d="M296.8 231.3 L326 243.5" stroke-width="2.02"/>
<path d="M299.8 161.4 L321.1 161.4" stroke-width="2.02"/>
<path d="M299.8 170.5 L322.6 170.5" stroke-width="2.5"/>
<path d="M287.7 207 L326 207" stroke-width="2.02"/>
<path d="M163 194.8 L181.2 190.3" stroke-width="2.02"/>
<path d="M172.1 172 L176.7 197.9" stroke-width="2.02"/>
<path d="M193.4 140.1 L213.2 134" stroke-width="2.02"/>
<path d="M163 223.7 L175.2 222.2" stroke-width="2.02"/>
<path d="M248.1 254.1 L278.6 254.1" stroke-width="1.78"/>
<path d="M260.3 240.4 L278.6 240.4" stroke-width="1.78"/>
<path d="M257.3 243.5 L257.3 264.8" stroke-width="1.78"/>
<path d="M394.4 134 L391.4 176.6" stroke-width="3.7"/>
<path d="M453 127.9 L449.2 182.7" stroke-width="3.94"/>
<path d="M367.1 149.2 L365.5 172" stroke-width="2.02"/>
<path d="M383.8 150.7 L382.3 172" stroke-width="2.02"/>
<path d="M376.2 164.4 L417.2 169" stroke-width="2.02"/>
<path d="M342.7 197.9 L341.2 219.1" stroke-width="2.5"/>
<path d="M389.9 208.5 L386.8 231.3" stroke-width="2.5"/>
<path d="M405.1 210 L403.5 228.3" stroke-width="2.5"/>
<path d="M326 207 L364 213.1" stroke-width="2.5"/>
<path d="M330.6 225.2 L329 240.4" stroke-width="2.5"/>
<path d="M388.3 219.1 L417.2 223.7" stroke-width="2.5"/>
<path d="M459.8 213.1 L487.2 216.9" stroke-width="2.98"/>
<path d="M458.3 225.2 L487.2 228.3" stroke-width="2.5"/>
<path d="M467.4 219.1 L465.9 240.4 L462.8 267.8" stroke-width="2.5"/>
<path d="M456.8 249.6 L487.2 252.6" stroke-width="2.5"/>
<path d="M435.5 243.5 L432.4 267.8" stroke-width="2.5"/>
<path d="M371.6 231.3 L435.5 243.5" stroke-width="3.94"/>
<path d="M326 234.3 L356.4 240.4" stroke-width="2.5"/>
<path d="M411.1 245 L386.8 240.4" stroke-width="2.02"/>
<path d="M478 216.1 L476.5 267.8" stroke-width="2.02"/>
<path d="M405.1 143.1 L447.6 149.2" stroke-width="1.78"/>
<path d="M423.3 164.4 L447.6 167.4" stroke-width="1.78"/>
<path d="M462.8 169 L484.9 172" stroke-width="2.02"/>
<path d="M472 149.2 L470.4 184.2" stroke-width="2.02"/>
<path d="M335.1 231.3 L333.6 246.5" stroke-width="2.02"/>
<path d="M345.8 232.8 L344.2 249.6" stroke-width="2.02"/>
<path d="M41.1 277.1 L57.8 307.5 L71.5 344" stroke-width="3.7"/>
<path d="M6.1 281.7 L18.2 325.8 L19.8 331.9" stroke-width="3.7"/>
<path d="M0 312.1 L45.6 301.4 L82.1 295.4" stroke-width="2.98"/>
<path d="M0 324.3 L53.2 313.6" stroke-width="2.5"/>
<path d="M0 299.9 L30.4 293.8" stroke-width="2.5"/>
<path d="M24.3 280.2 L30.4 313.6" stroke-width="2.5"/>
<path d="M30.4 295.4 L38 319.7" stroke-width="2.02"/>
<path d="M89.7 296.9 L111 296.9" stroke-width="2.5"/>
<path d="M89.7 304.5 L112.5 304.5" stroke-width="3.7"/>
<path d="M89.7 322 L136.8 321.2 L163 316.7" stroke-width="4.3"/>
<path d="M113.3 274.1 L112.5 321.2 L121.6 353.1 L123.2 366.8" stroke-width="2.98"/>
<path d="M130.8 287.8 L136.8 313.6 L146 318.2" stroke-width="2.5"/>
<path d="M115.6 286.2 L130.8 287.8 L152 306 L146 315.1 L133.8 319.7" stroke-width="2.5"/>
<path d="M121.6 347.1 L158.1 344" stroke-width="2.5"/>
<path d="M123.2 365.3 L156.6 365.3" stroke-width="2.5"/>
<path d="M85.1 347.1 L103.4 353.1 L104.9 365.3" stroke-width="2.5"/>
<path d="M0 372.9 L44.1 372.9 L53.2 386.6 L54.7 401.8" stroke-width="3.7"/>
<path d="M4.6 359.2 L15.2 401.8" stroke-width="2.5"/>
<path d="M22.8 360.7 L22.8 372.9" stroke-width="2.5"/>
<path d="M0 385.1 L53.2 389.6" stroke-width="2.5"/>
<path d="M73 356.2 L54.7 383.6" stroke-width="2.5"/>
<path d="M86.7 365.3 L104.9 365.3" stroke-width="2.5"/>
<path d="M88.2 374.4 L106.4 374.4" stroke-width="2.02"/>
<path d="M91.2 380.5 L91.2 401.8" stroke-width="2.02"/>
<path d="M104.9 365.3 L106.4 401.8" stroke-width="2.5"/>
<path d="M124.7 383.6 L126.2 401.8" stroke-width="2.02"/>
<path d="M146 382 L147.5 401.8" stroke-width="2.02"/>
<path d="M51.7 274.1 L73 292.3 L82.1 313.6" stroke-width="2.5"/>
<path d="M63.9 290.8 L82.1 283.2" stroke-width="2.5"/>
<path d="M0 290.8 L6.1 283.2" stroke-width="2.5"/>
<path d="M45.6 321.2 L63.9 318.2" stroke-width="2.02"/>
<path d="M18.2 336.4 L45.6 339.5 L57.8 344" stroke-width="2.02"/>
<path d="M0 344 L18.2 336.4" stroke-width="2.02"/>
<path d="M30.4 374.4 L30.4 386.6" stroke-width="2.02"/>
<path d="M0 398.8 L15.2 389.6" stroke-width="2.02"/>
<path d="M114 295.4 L130.8 298.4" stroke-width="2.02"/>
<path d="M115.6 310.6 L133.8 310.6" stroke-width="2.02"/>
<path d="M133.8 331.9 L158.1 334.9" stroke-width="2.02"/>
<path d="M141.4 319.7 L142.9 344" stroke-width="2.02"/>
<path d="M152 268 L153.6 286.2" stroke-width="2.02"/>
<path d="M133.8 268 L136.8 283.2" stroke-width="2.02"/>
<path d="M326 331.9 L309 359.2 L292.2 401.8" stroke-width="3.7"/>
<path d="M252.7 309.1 L281.6 316.7" stroke-width="4.3"/>
<path d="M239 295.4 L248.1 296.9 L286.2 303" stroke-width="2.5"/>
<path d="M269.4 287.8 L266.4 307.5" stroke-width="2.5"/>
<path d="M280.1 374.4 L299.8 382" stroke-width="3.7"/>
<path d="M326 353.1 L315 359.2" stroke-width="2.5"/>
<path d="M296.8 344 L324.2 354.7" stroke-width="2.02"/>
<path d="M167.6 319.7 L178.2 310.6 L188.8 313.6 L190.4 322.7 L178.2 344 L175.2 377.5" stroke-width="3.7"/>
<path d="M163 319.7 L178.2 321.2" stroke-width="2.98"/>
<path d="M166 307.5 L188.8 313.6" stroke-width="2.98"/>
<path d="M190.4 313.6 L207.1 277.1 L216.2 274.1 L222.3 278.6 L208.6 313.6 L199.5 322.7" stroke-width="2.98"/>
<path d="M163 341 L211.7 353.1" stroke-width="2.5"/>
<path d="M188.8 339.5 L201 347.1" stroke-width="2.02"/>
<path d="M163 328.8 L172.1 331.9 L178.2 344" stroke-width="2.98"/>
<path d="M257.3 325.8 L278.6 331.9" stroke-width="2.02"/>
<path d="M260.3 339.5 L272.5 342.5" stroke-width="2.02"/>
<path d="M296.8 306 L315 313.6" stroke-width="2.02"/>
<path d="M293.8 318.2 L304.4 321.2" stroke-width="2.02"/>
<path d="M281.6 389.6 L296.8 395.7" stroke-width="2.02"/>
<path d="M304.4 374.4 L326 383.6" stroke-width="2.02"/>
<path d="M163 359.2 L175.2 360.7" stroke-width="2.02"/>
<path d="M182.8 385.1 L185.8 401.8" stroke-width="2.02"/>
<path d="M248.1 283.2 L252.7 284.7" stroke-width="2.02"/>
<path d="M326 339.5 L371.6 366.8 L417.2 397.2 L423.3 401.8" stroke-width="4.3"/>
<path d="M335.1 313.6 L326 334.9" stroke-width="3.7"/>
<path d="M371.6 366.8 L356.4 401.8" stroke-width="3.7"/>
<path d="M380.7 336.4 L373.1 365.3" stroke-width="2.5"/>
<path d="M386.8 268 L391.4 304.5" stroke-width="3.7"/>
<path d="M447.6 281.7 L443.1 334.9" stroke-width="3.7"/>
<path d="M394.4 293.8 L444.6 293.8" stroke-width="2.02"/>
<path d="M414.2 298.4 L432.4 312.1" stroke-width="2.02"/>
<path d="M399 353.1 L423.3 325.8 L429.4 313.6" stroke-width="2.5"/>
<path d="M391.4 365.3 L411.1 374.4 L432.4 374.4" stroke-width="2.02"/>
<path d="M417.2 353.1 L438.5 365.3" stroke-width="2.02"/>
<path d="M392.9 359.2 L435.5 383.6" stroke-width="2.5"/>
<path d="M470.4 362.3 L441.6 401.8" stroke-width="3.7"/>
<path d="M423.3 356.2 L432.4 347.1" stroke-width="2.02"/>
<path d="M432.4 365.3 L444.6 353.1" stroke-width="2.02"/>
<path d="M447.6 374.4 L458.3 362.3" stroke-width="2.02"/>
<path d="M326 353.1 L362.5 374.4" stroke-width="2.02"/>
<path d="M341.2 365.3 L326 389.6" stroke-width="2.02"/>
<path d="M361 374.4 L345.8 401.8" stroke-width="2.02"/>
<path d="M374.7 383.6 L394.4 392.7" stroke-width="2.02"/>
<path d="M417.2 268 L415.7 290.8" stroke-width="2.02"/>
<path d="M432.4 274.1 L430.9 301.4" stroke-width="2.02"/>
<path d="M462.8 283.2 L459.8 318.2" stroke-width="2.02"/>
<path d="M411.1 316.7 L399 337.9" stroke-width="2.02"/>
<path d="M345.8 316.7 L374.7 330.3" stroke-width="1.78"/>
<path d="M432.4 386.6 L417.2 401.8" stroke-width="2.02"/>
<path d="M459.8 383.6 L472 395.7" stroke-width="2.02"/>
<path d="M386.8 374.4 L376.2 398.8" stroke-width="2.02"/>
<path d="M364 277.1 L361 298.4" stroke-width="2.02"/>
<path d="M389.9 331.9 L408.1 341" stroke-width="2.02"/>
</g>
<g fill="none" stroke-linecap="round" stroke-linejoin="round" stroke="#b7b97e">
<path d="M70 -2 L72.7 23 L78 57 L77 75 L70 102 L61 127 L58.5 141 L57.8 156.8 L56.3 179.6 L53.2 197.9 L48.7 216 L44 231 L42 243 L42.5 252 L50 263.6 L68 270 L89.7 278" stroke-width="7.3"/>
<path d="M78.3 48.8 L90.8 37.5 L102.2 35.2 L120.3 40.9 L136.2 48.8 L154.4 61.3 L168 74.9 L181.7 88.6 L194.1 101" stroke-width="6.5"/>
<path d="M180.5 -2.3 L158.9 34.1 L145.3 61.3 L129.4 88.6 L115.8 113.5 L109 127.2" stroke-width="6.5"/>
<path d="M132.8 -2.3 L140.8 9.1 L158.9 17 L172.6 20.4 L181.7 36.3 L193 56.8 L204.4 74.9 L213.4 85.1" stroke-width="6.5"/>
<path d="M249.8 63.6 L227.1 77.2 L213.4 86.3 L197.5 99.9 L181.7 113.5 L163.5 127.2 L147.6 136.2 L134 139.6 L122.6 136.2 L115.8 131.7 L99.9 134 L81.7 135.1 L59 136.2 L34.1 140.8 L11.4 143.5 L-2.3 144.4" stroke-width="6.5"/>
<path d="M236.1 -2.3 L249.8 10.2" stroke-width="6.5"/>
<path d="M0 140.8 L2.3 158.9 L3.4 204.4" stroke-width="5.1"/>
<path d="M235.5 0 L240 6.8 L260.4 38.6 L274.1 72.7 L287.7 106.7 L299 134 L308.1 147.6 L317.2 156.7" stroke-width="6.5"/>
<path d="M235.5 68.1 L262.7 56.8 L296.8 36.3 L319.5 20.4 L337.6 9.1 L353.5 -2.3" stroke-width="6.5"/>
<path d="M346.7 0 L367.2 22.7 L383.1 43.1 L398.9 63.6 L417.1 84 L435.3 104.5 L451.2 122.6 L455.7 128.3" stroke-width="6.5"/>
<path d="M451.2 126 L489.8 131.2" stroke-width="6.5"/>
<path d="M424.5 -2 L405 19.8 L383.8 45.6 L369 71 L355 94 L344 121 L338 140 L330 160 L326 172" stroke-width="6.5"/>
<path d="M299 155.5 L314.9 151 L330.8 147.6" stroke-width="6.5"/>
<path d="M308.1 158.9 L321.7 163.5 L326.3 172.6" stroke-width="6.5"/>
<path d="M-5 205.5 L0 207 L23 214.6 L46 220.7 L68 223.7 L91 224.5 L114 220.7 L137 216 L163 211 L193.4 201 L231.4 188 L254 179.6 L284.6 172 L326 170.8 L371.6 176.6 L444.6 182.6 L490 187.5" stroke-width="6.1"/>
<path d="M-5 217.5 L0 219 L23 226.7 L46 232.8 L68 235.9 L91 237.4 L114 234.3 L137 229.8 L163 223.5 L193.4 214.6 L236 200 L257 193.3 L284.6 188 L326 193 L371.6 202.4 L444.6 211.5 L456.8 213" stroke-width="6.1"/>
<path d="M238.4 244.3 L204.4 251.1 L177.1 253.4 L147.6 253.4 L127.2 256.8 L113.5 263.6 L99.9 274.9 L90.8 279.9" stroke-width="6.5"/>
<path d="M89.7 278.3 L56.8 273.1 L22.7 278.3 L-2.3 279.5" stroke-width="6.5"/>
<path d="M90.8 279.5 L87.4 302.2 L86.3 324.9 L82.9 347.6 L81.7 370.3 L78.3 404.4" stroke-width="6.5"/>
<path d="M-2.3 358.9 L27.2 355.5 L54.5 347.6 L79.5 352.1 L97.6 363.5 L113.5 370.3 L145.3 379.4 L163.5 380.5 L197.5 380.5 L218 388.5 L249.8 402.1" stroke-width="6.5"/>
<path d="M178.2 253.4 L178.2 286.3 L166.9 309 L163.5 327.2 L158.9 354.4 L161.2 379.4 L165.8 404.4" stroke-width="6.5"/>
<path d="M237.7 197.7 L253.6 213.6 L262.7 222.7 L285.4 229.5 L319.5 243.1 L349 254.5 L376.2 261.3 L398.9 268.1 L444.4 278.3 L489.8 287.4" stroke-width="6.5"/>
<path d="M262.7 222.7 L249.1 231.8 L237.7 239.7" stroke-width="6.5"/>
<path d="M237.7 269.3 L253.6 274.9 L285.4 290.8 L317.2 299.9 L337.6 311.3 L367.2 329.4 L385.3 340.8 L421.7 358.9 L444.4 372.6 L467.1 388.5 L483 404.4" stroke-width="6.5"/>
<path d="M317.2 299.9 L330.8 290.8 L344.5 295.4 L376.2 302.2 L398.9 309 L421.7 322.6 L444.4 340.8 L467.1 358.9 L480.7 372.6" stroke-width="6.5"/>
<path d="M375.1 197.7 L367.2 227.2 L358.1 250 L346.7 274.9 L339.9 297.6 L335.4 312.4" stroke-width="6.5"/>
<path d="M285.4 197.7 L285.4 229.5" stroke-width="6.5"/>
<path d="M321.7 197.7 L321.7 220.4 L367.2 227.2" stroke-width="6.5"/>
<path d="M374 202.3 L410.3 209.1 L455.7 214.1 L453.4 245.4 L450.7 280.6" stroke-width="6.5"/>
<path d="M292.2 290.8 L285.4 313.5 L278.6 340.8 L271.8 372.6 L263.8 404.4" stroke-width="6.5"/>
<path d="M237.7 342.6 L262.7 349.9 L308.1 370.3 L330.8 379.4 L353.5 393 L369.4 404.4" stroke-width="6.5"/>
<path d="M325.1 404.4 L330.8 380.5" stroke-width="6.5"/>
<path d="M251.4 277.2 L253.6 290.8 L249.1 318.1 L244.5 344.2" stroke-width="4.7"/>
<path d="M376.2 261.3 L387.6 245.4 L376.2 229.5 L367.2 227.2" stroke-width="5.7"/>
<path d="M335.1 134 L330.6 149.2 L329 170.5" stroke-width="6.3"/>
<path d="M362.5 226.7 L371.6 203.9" stroke-width="6.3"/>
<path d="M447.6 185.7 L447.6 210.8" stroke-width="6.6"/>
</g>
<g fill="none" stroke-linecap="round" stroke-linejoin="round" stroke="#f5f7c0">
<path d="M70 -2 L72.7 23 L78 57 L77 75 L70 102 L61 127 L58.5 141 L57.8 156.8 L56.3 179.6 L53.2 197.9 L48.7 216 L44 231 L42 243 L42.5 252 L50 263.6 L68 270 L89.7 278" stroke-width="6.2"/>
<path d="M78.3 48.8 L90.8 37.5 L102.2 35.2 L120.3 40.9 L136.2 48.8 L154.4 61.3 L168 74.9 L181.7 88.6 L194.1 101" stroke-width="5.4"/>
<path d="M180.5 -2.3 L158.9 34.1 L145.3 61.3 L129.4 88.6 L115.8 113.5 L109 127.2" stroke-width="5.4"/>
<path d="M132.8 -2.3 L140.8 9.1 L158.9 17 L172.6 20.4 L181.7 36.3 L193 56.8 L204.4 74.9 L213.4 85.1" stroke-width="5.4"/>
<path d="M249.8 63.6 L227.1 77.2 L213.4 86.3 L197.5 99.9 L181.7 113.5 L163.5 127.2 L147.6 136.2 L134 139.6 L122.6 136.2 L115.8 131.7 L99.9 134 L81.7 135.1 L59 136.2 L34.1 140.8 L11.4 143.5 L-2.3 144.4" stroke-width="5.4"/>
<path d="M236.1 -2.3 L249.8 10.2" stroke-width="5.4"/>
<path d="M0 140.8 L2.3 158.9 L3.4 204.4" stroke-width="4"/>
<path d="M235.5 0 L240 6.8 L260.4 38.6 L274.1 72.7 L287.7 106.7 L299 134 L308.1 147.6 L317.2 156.7" stroke-width="5.4"/>
<path d="M235.5 68.1 L262.7 56.8 L296.8 36.3 L319.5 20.4 L337.6 9.1 L353.5 -2.3" stroke-width="5.4"/>
<path d="M346.7 0 L367.2 22.7 L383.1 43.1 L398.9 63.6 L417.1 84 L435.3 104.5 L451.2 122.6 L455.7 128.3" stroke-width="5.4"/>
<path d="M451.2 126 L489.8 131.2" stroke-width="5.4"/>
<path d="M424.5 -2 L405 19.8 L383.8 45.6 L369 71 L355 94 L344 121 L338 140 L330 160 L326 172" stroke-width="5.4"/>
<path d="M299 155.5 L314.9 151 L330.8 147.6" stroke-width="5.4"/>
<path d="M308.1 158.9 L321.7 163.5 L326.3 172.6" stroke-width="5.4"/>
<path d="M-5 205.5 L0 207 L23 214.6 L46 220.7 L68 223.7 L91 224.5 L114 220.7 L137 216 L163 211 L193.4 201 L231.4 188 L254 179.6 L284.6 172 L326 170.8 L371.6 176.6 L444.6 182.6 L490 187.5" stroke-width="5"/>
<path d="M-5 217.5 L0 219 L23 226.7 L46 232.8 L68 235.9 L91 237.4 L114 234.3 L137 229.8 L163 223.5 L193.4 214.6 L236 200 L257 193.3 L284.6 188 L326 193 L371.6 202.4 L444.6 211.5 L456.8 213" stroke-width="5"/>
<path d="M238.4 244.3 L204.4 251.1 L177.1 253.4 L147.6 253.4 L127.2 256.8 L113.5 263.6 L99.9 274.9 L90.8 279.9" stroke-width="5.4"/>
<path d="M89.7 278.3 L56.8 273.1 L22.7 278.3 L-2.3 279.5" stroke-width="5.4"/>
<path d="M90.8 279.5 L87.4 302.2 L86.3 324.9 L82.9 347.6 L81.7 370.3 L78.3 404.4" stroke-width="5.4"/>
<path d="M-2.3 358.9 L27.2 355.5 L54.5 347.6 L79.5 352.1 L97.6 363.5 L113.5 370.3 L145.3 379.4 L163.5 380.5 L197.5 380.5 L218 388.5 L249.8 402.1" stroke-width="5.4"/>
<path d="M178.2 253.4 L178.2 286.3 L166.9 309 L163.5 327.2 L158.9 354.4 L161.2 379.4 L165.8 404.4" stroke-width="5.4"/>
<path d="M237.7 197.7 L253.6 213.6 L262.7 222.7 L285.4 229.5 L319.5 243.1 L349 254.5 L376.2 261.3 L398.9 268.1 L444.4 278.3 L489.8 287.4" stroke-width="5.4"/>
<path d="M262.7 222.7 L249.1 231.8 L237.7 239.7" stroke-width="5.4"/>
<path d="M237.7 269.3 L253.6 274.9 L285.4 290.8 L317.2 299.9 L337.6 311.3 L367.2 329.4 L385.3 340.8 L421.7 358.9 L444.4 372.6 L467.1 388.5 L483 404.4" stroke-width="5.4"/>
<path d="M317.2 299.9 L330.8 290.8 L344.5 295.4 L376.2 302.2 L398.9 309 L421.7 322.6 L444.4 340.8 L467.1 358.9 L480.7 372.6" stroke-width="5.4"/>
<path d="M375.1 197.7 L367.2 227.2 L358.1 250 L346.7 274.9 L339.9 297.6 L335.4 312.4" stroke-width="5.4"/>
<path d="M285.4 197.7 L285.4 229.5" stroke-width="5.4"/>
<path d="M321.7 197.7 L321.7 220.4 L367.2 227.2" stroke-width="5.4"/>
<path d="M374 202.3 L410.3 209.1 L455.7 214.1 L453.4 245.4 L450.7 280.6" stroke-width="5.4"/>
<path d="M292.2 290.8 L285.4 313.5 L278.6 340.8 L271.8 372.6 L263.8 404.4" stroke-width="5.4"/>
<path d="M237.7 342.6 L262.7 349.9 L308.1 370.3 L330.8 379.4 L353.5 393 L369.4 404.4" stroke-width="5.4"/>
<path d="M325.1 404.4 L330.8 380.5" stroke-width="5.4"/>
<path d="M251.4 277.2 L253.6 290.8 L249.1 318.1 L244.5 344.2" stroke-width="3.6"/>
<path d="M376.2 261.3 L387.6 245.4 L376.2 229.5 L367.2 227.2" stroke-width="4.6"/>
<path d="M335.1 134 L330.6 149.2 L329 170.5" stroke-width="5.2"/>
<path d="M362.5 226.7 L371.6 203.9" stroke-width="5.2"/>
<path d="M447.6 185.7 L447.6 210.8" stroke-width="5.5"/>
</g>
<g fill="none" stroke="#d6c9d2" stroke-width="1" stroke-dasharray="2 3.4" stroke-opacity=".8">
<path d="M70 -2 L72.7 23 L78 57 L77 75 L70 102 L61 127 L58.5 141 L57.8 156.8 L56.3 179.6 L53.2 197.9 L48.7 216 L44 231 L42 243 L42.5 252 L50 263.6 L68 270 L89.7 278"/>
<path d="M78.3 48.8 L90.8 37.5 L102.2 35.2 L120.3 40.9 L136.2 48.8 L154.4 61.3 L168 74.9 L181.7 88.6 L194.1 101"/>
<path d="M180.5 -2.3 L158.9 34.1 L145.3 61.3 L129.4 88.6 L115.8 113.5 L109 127.2"/>
<path d="M132.8 -2.3 L140.8 9.1 L158.9 17 L172.6 20.4 L181.7 36.3 L193 56.8 L204.4 74.9 L213.4 85.1"/>
<path d="M249.8 63.6 L227.1 77.2 L213.4 86.3 L197.5 99.9 L181.7 113.5 L163.5 127.2 L147.6 136.2 L134 139.6 L122.6 136.2 L115.8 131.7 L99.9 134 L81.7 135.1 L59 136.2 L34.1 140.8 L11.4 143.5 L-2.3 144.4"/>
<path d="M236.1 -2.3 L249.8 10.2"/>
<path d="M235.5 0 L240 6.8 L260.4 38.6 L274.1 72.7 L287.7 106.7 L299 134 L308.1 147.6 L317.2 156.7"/>
<path d="M235.5 68.1 L262.7 56.8 L296.8 36.3 L319.5 20.4 L337.6 9.1 L353.5 -2.3"/>
<path d="M346.7 0 L367.2 22.7 L383.1 43.1 L398.9 63.6 L417.1 84 L435.3 104.5 L451.2 122.6 L455.7 128.3"/>
<path d="M451.2 126 L489.8 131.2"/>
<path d="M424.5 -2 L405 19.8 L383.8 45.6 L369 71 L355 94 L344 121 L338 140 L330 160 L326 172"/>
<path d="M299 155.5 L314.9 151 L330.8 147.6"/>
<path d="M308.1 158.9 L321.7 163.5 L326.3 172.6"/>
<path d="M-5 205.5 L0 207 L23 214.6 L46 220.7 L68 223.7 L91 224.5 L114 220.7 L137 216 L163 211 L193.4 201 L231.4 188 L254 179.6 L284.6 172 L326 170.8 L371.6 176.6 L444.6 182.6 L490 187.5"/>
<path d="M-5 217.5 L0 219 L23 226.7 L46 232.8 L68 235.9 L91 237.4 L114 234.3 L137 229.8 L163 223.5 L193.4 214.6 L236 200 L257 193.3 L284.6 188 L326 193 L371.6 202.4 L444.6 211.5 L456.8 213"/>
<path d="M238.4 244.3 L204.4 251.1 L177.1 253.4 L147.6 253.4 L127.2 256.8 L113.5 263.6 L99.9 274.9 L90.8 279.9"/>
<path d="M89.7 278.3 L56.8 273.1 L22.7 278.3 L-2.3 279.5"/>
<path d="M90.8 279.5 L87.4 302.2 L86.3 324.9 L82.9 347.6 L81.7 370.3 L78.3 404.4"/>
<path d="M-2.3 358.9 L27.2 355.5 L54.5 347.6 L79.5 352.1 L97.6 363.5 L113.5 370.3 L145.3 379.4 L163.5 380.5 L197.5 380.5 L218 388.5 L249.8 402.1"/>
<path d="M178.2 253.4 L178.2 286.3 L166.9 309 L163.5 327.2 L158.9 354.4 L161.2 379.4 L165.8 404.4"/>
<path d="M237.7 197.7 L253.6 213.6 L262.7 222.7 L285.4 229.5 L319.5 243.1 L349 254.5 L376.2 261.3 L398.9 268.1 L444.4 278.3 L489.8 287.4"/>
<path d="M262.7 222.7 L249.1 231.8 L237.7 239.7"/>
<path d="M237.7 269.3 L253.6 274.9 L285.4 290.8 L317.2 299.9 L337.6 311.3 L367.2 329.4 L385.3 340.8 L421.7 358.9 L444.4 372.6 L467.1 388.5 L483 404.4"/>
<path d="M317.2 299.9 L330.8 290.8 L344.5 295.4 L376.2 302.2 L398.9 309 L421.7 322.6 L444.4 340.8 L467.1 358.9 L480.7 372.6"/>
<path d="M375.1 197.7 L367.2 227.2 L358.1 250 L346.7 274.9 L339.9 297.6 L335.4 312.4"/>
<path d="M285.4 197.7 L285.4 229.5"/>
<path d="M321.7 197.7 L321.7 220.4 L367.2 227.2"/>
<path d="M374 202.3 L410.3 209.1 L455.7 214.1 L453.4 245.4 L450.7 280.6"/>
<path d="M292.2 290.8 L285.4 313.5 L278.6 340.8 L271.8 372.6 L263.8 404.4"/>
<path d="M237.7 342.6 L262.7 349.9 L308.1 370.3 L330.8 379.4 L353.5 393 L369.4 404.4"/>
<path d="M325.1 404.4 L330.8 380.5"/>
<path d="M335.1 134 L330.6 149.2 L329 170.5"/>
<path d="M362.5 226.7 L371.6 203.9"/>
<path d="M447.6 185.7 L447.6 210.8"/>
</g>
<g fill="none" stroke-linejoin="round">
<path d="M403.5 62.4 L380.8 84 L353.5 96.5 L339.9 105.6" stroke="#2e2e2e" stroke-width="11.8"/>
<path d="M403.5 62.4 L380.8 84 L353.5 96.5 L339.9 105.6" stroke="#f4f4f4" stroke-width="10.2"/>
<path d="M403.5 62.4 L380.8 84 L353.5 96.5 L339.9 105.6" stroke="#6a6a6a" stroke-width="8.6"/>
<path d="M403.5 62.4 L380.8 84 L353.5 96.5 L339.9 105.6" stroke="#cfcfcf" stroke-width="0.7"/>
<path d="M489.8 -3.4 L455.7 18.2 L433 34.1 L398.9 65.8 L380.8 84 L353.5 95.4 L330.8 111.3 L310.4 129.4 L296.8 145.3 L291.1 163.5 L290 181.7 L294.5 204.4" stroke="#2e2e2e" stroke-width="7.8"/>
<path d="M489.8 -3.4 L455.7 18.2 L433 34.1 L398.9 65.8 L380.8 84 L353.5 95.4 L330.8 111.3 L310.4 129.4 L296.8 145.3 L291.1 163.5 L290 181.7 L294.5 204.4" stroke="#f4f4f4" stroke-width="6.2"/>
<path d="M489.8 -3.4 L455.7 18.2 L433 34.1 L398.9 65.8 L380.8 84 L353.5 95.4 L330.8 111.3 L310.4 129.4 L296.8 145.3 L291.1 163.5 L290 181.7 L294.5 204.4" stroke="#6a6a6a" stroke-width="4.6"/>
<path d="M489.8 -3.4 L455.7 18.2 L433 34.1 L398.9 65.8 L380.8 84 L353.5 95.4 L330.8 111.3 L310.4 129.4 L296.8 145.3 L291.1 163.5 L290 181.7 L294.5 204.4" stroke="#cfcfcf" stroke-width="0.7"/>
<path d="M404.3 -1.5 L417.2 12.2 L432.4 28.9 L447.6 41.1 L459.8 56.3 L467.4 76 L469.7 98.8 L470.4 124.7" stroke="#6a6a6a" stroke-width="4.2"/>
<path d="M404.3 -1.5 L417.2 12.2 L432.4 28.9 L447.6 41.1 L459.8 56.3 L467.4 76 L469.7 98.8 L470.4 124.7" stroke="#d4d4d4" stroke-width="1.2" stroke-dasharray="2.5 3"/>
<path d="M458 -1.5 L462.8 18.2 L468.9 45.6 L476.5 71.5 L487.2 94.3" stroke="#6a6a6a" stroke-width="4.2"/>
<path d="M458 -1.5 L462.8 18.2 L468.9 45.6 L476.5 71.5 L487.2 94.3" stroke="#d4d4d4" stroke-width="1.2" stroke-dasharray="2.5 3"/>
<path d="M487.2 0 L476.5 19.8 L472 39.5 L469.2 47.1" stroke="#6a6a6a" stroke-width="4.2"/>
<path d="M487.2 0 L476.5 19.8 L472 39.5 L469.2 47.1" stroke="#d4d4d4" stroke-width="1.2" stroke-dasharray="2.5 3"/>
<path d="M294.5 197.7 L314.9 222.7 L330.8 245.4 L349 261.3 L367.2 269.3 L398.9 284 L426.2 297.6 L453.4 313.5 L471.6 329.4 L489.8 341.9" stroke="#2e2e2e" stroke-width="7.3"/>
<path d="M294.5 197.7 L314.9 222.7 L330.8 245.4 L349 261.3 L367.2 269.3 L398.9 284 L426.2 297.6 L453.4 313.5 L471.6 329.4 L489.8 341.9" stroke="#f4f4f4" stroke-width="5.7"/>
<path d="M294.5 197.7 L314.9 222.7 L330.8 245.4 L349 261.3 L367.2 269.3 L398.9 284 L426.2 297.6 L453.4 313.5 L471.6 329.4 L489.8 341.9" stroke="#6a6a6a" stroke-width="4.1"/>
<path d="M294.5 197.7 L314.9 222.7 L330.8 245.4 L349 261.3 L367.2 269.3 L398.9 284 L426.2 297.6 L453.4 313.5 L471.6 329.4 L489.8 341.9" stroke="#cfcfcf" stroke-width="0.7"/>
</g>
<g fill="none" stroke="#5c5c5c" stroke-width="1.3" stroke-linejoin="round">
<path d="M27.2 -1.1 L28.4 13.6 L36.3 31.8 L47.7 54.5 L54.5 61.3 L68.1 59.5 L88.6 51.8 L95.4 54.5 L113.5 70.4 L136.2 86.3 L154.4 102.2 L168 115.8 L174.8 118.1 L188.5 111.3 L204.4 95.4 L218 81.7 L231.6 74.9 L236.1 79.5 L240.7 106.7 L245 113.5 L249.8 140.8"/>
<path d="M-1.1 194.1 L52.2 194.8 L90.8 198.7 L127.2 193 L158.9 185.1 L195.3 177.1 L231.6 171.4 L249.8 168"/>
<path d="M240 163.5 L255.9 156.7 L292.2 149.9 L317.2 136.2 L330.8 137.4 L342.2 138.5 L358.1 145.3 L374 147.6 L421.7 153.3 L467.1 156.7 L489.8 158.9"/>
<path d="M238.4 197.7 L240.7 222.7 L236.1 245.4 L238.4 265.8 L249.8 272.7"/>
<path d="M237.7 238.6 L249.1 231.8 L262.7 222.7 L260.4 209.1"/>
<path d="M237.5 266.5 L242.1 274.1 L254.2 277.1 L252.7 298.4 L248.1 328.8 L243.6 342.5 L239 344 L223.8 337.9 L219.3 341 L213.2 353.1 L202.5 377.5 L192.6 403.3"/>
</g>
<g fill="none" stroke="#7d7d7d" stroke-width="1" stroke-linejoin="round">
<path d="M211.2 88.6 L215.7 106.7 L223.7 136.2 L231.6 161.2 L236.1 181.7 L240.7 204.4"/>
<path d="M240 90.8 L246.8 127.2 L255.9 156.7 L260.4 181.7 L261.6 204.4"/>
</g>
<g fill="#6b7cc0">
<rect x="25.5" y="-0.6" width="3.4" height="3.4"/>
<rect x="67.6" y="57.8" width="3.4" height="3.4"/>
<rect x="160.7" y="109.1" width="3.4" height="3.4"/>
<rect x="222" y="77.1" width="3.4" height="3.4"/>
<rect x="215.1" y="106.2" width="3.4" height="3.4"/>
<rect x="229.5" y="159.1" width="3.4" height="3.4"/>
<rect x="160.2" y="182.9" width="3.4" height="3.4"/>
<rect x="167.5" y="182.2" width="3.4" height="3.4"/>
<rect x="20.3" y="193.1" width="3.4" height="3.4"/>
<rect x="69.1" y="196.5" width="3.4" height="3.4"/>
<rect x="377.9" y="84.1" width="3.4" height="3.4"/>
<rect x="345" y="119.3" width="3.4" height="3.4"/>
<rect x="323.4" y="134.1" width="3.4" height="3.4"/>
<rect x="329.8" y="135.9" width="3.4" height="3.4"/>
<rect x="372.3" y="146.3" width="3.4" height="3.4"/>
<rect x="421.1" y="152" width="3.4" height="3.4"/>
<rect x="469.2" y="123.9" width="3.4" height="3.4"/>
<rect x="254.2" y="153.2" width="3.4" height="3.4"/>
<rect x="294.4" y="192.9" width="3.4" height="3.4"/>
<rect x="362.1" y="267.1" width="3.4" height="3.4"/>
<rect x="481.3" y="335.2" width="3.4" height="3.4"/>
<rect x="251.2" y="290.3" width="3.4" height="3.4"/>
<rect x="248.1" y="228.3" width="3.4" height="3.4"/>
<rect x="239.4" y="208.1" width="3.4" height="3.4"/>
<rect x="211.7" y="350" width="3.4" height="3.4"/>
<rect x="239" y="207.8" width="3.4" height="3.4"/>
<rect x="213.8" y="187.3" width="3.4" height="3.4"/>
<rect x="239.3" y="206.8" width="3.4" height="3.4"/>
<rect x="248.3" y="227.8" width="3.4" height="3.4"/>
</g>
<g font-family="'Liberation Sans',sans-serif" font-size="10" text-anchor="middle">
<rect x="158" y="20" width="32" height="16" rx="2" fill="#f1f2d3" stroke="#c6c792" stroke-width="0.8"/>
<text x="174" y="31.6" fill="#50540f">R132</text>
<rect x="236.5" y="19.7" width="32" height="16" rx="2" fill="#f1f2d3" stroke="#c6c792" stroke-width="0.8"/>
<text x="252.5" y="31.3" fill="#50540f">R802</text>
<rect x="380.7" y="23" width="32" height="16" rx="2" fill="#f1f2d3" stroke="#c6c792" stroke-width="0.8"/>
<text x="396.7" y="34.6" fill="#50540f">R105</text>
<rect x="84" y="121.4" width="32" height="16" rx="2" fill="#f1f2d3" stroke="#c6c792" stroke-width="0.8"/>
<text x="100" y="133" fill="#50540f">R804</text>
<rect x="23" y="243" width="32" height="16" rx="2" fill="#f1f2d3" stroke="#c6c792" stroke-width="0.8"/>
<text x="39" y="254.6" fill="#50540f">R108</text>
<rect x="156" y="290" width="32" height="16" rx="2" fill="#f1f2d3" stroke="#c6c792" stroke-width="0.8"/>
<text x="172" y="301.6" fill="#50540f">R114</text>
<rect x="110.7" y="366.8" width="32" height="16" rx="2" fill="#f1f2d3" stroke="#c6c792" stroke-width="0.8"/>
<text x="126.7" y="378.4" fill="#50540f">R110</text>
<rect x="262" y="351" width="32" height="16" rx="2" fill="#f1f2d3" stroke="#c6c792" stroke-width="0.8"/>
<text x="278" y="362.6" fill="#50540f">R138</text>
<rect x="380.2" y="338" width="32" height="16" rx="2" fill="#f1f2d3" stroke="#c6c792" stroke-width="0.8"/>
<text x="396.2" y="349.6" fill="#50540f">R118</text>
<rect x="436.8" y="241.5" width="32" height="16" rx="2" fill="#f1f2d3" stroke="#c6c792" stroke-width="0.8"/>
<text x="452.8" y="253.1" fill="#50540f">R813</text>
</g>
<text x="50" y="52.7" font-size="15.5" fill="#777" text-anchor="end" font-family="'Liberation Sans',sans-serif" stroke="#fff" stroke-width="2" stroke-opacity="0.7" paint-order="stroke" stroke-linejoin="round" >Grangegorman</text>
<text x="43" y="173.7" font-size="11.8" fill="#555" text-anchor="end" font-family="'Liberation Sans',sans-serif" stroke="#fff" stroke-width="2" stroke-opacity="0.7" paint-order="stroke" stroke-linejoin="round" >Smithfield</text>
<text x="62.4" y="338.5" font-size="14.6" fill="#777" text-anchor="end" font-family="'Liberation Sans',sans-serif" stroke="#fff" stroke-width="2" stroke-opacity="0.7" paint-order="stroke" stroke-linejoin="round" >The Liberties</text>
<text x="223.2" y="156" font-size="15.5" fill="#333" text-anchor="middle" font-family="'Liberation Sans',sans-serif" stroke="#fff" stroke-width="2" stroke-opacity="0.7" paint-order="stroke" stroke-linejoin="round" >Dublin</text>
<text x="193.2" y="230.7" font-size="11.5" fill="#333" text-anchor="middle" font-family="'Liberation Sans',sans-serif" stroke="#fff" stroke-width="2" stroke-opacity="0.7" paint-order="stroke" stroke-linejoin="round" >Temple Bar</text>
<text x="296" y="210.8" font-size="10.5" fill="#4553bd" text-anchor="middle" font-family="'Liberation Sans',sans-serif" stroke="#fff" stroke-width="2" stroke-opacity="0.7" paint-order="stroke" stroke-linejoin="round" font-weight="bold">Tara Street</text>
<text x="307.4" y="185.7" font-size="10.5" fill="#6a96cf" text-anchor="middle" font-family="'Liberation Sans',sans-serif" stroke="#fff" stroke-width="2" stroke-opacity="0.7" paint-order="stroke" stroke-linejoin="round" font-style="italic">Liffey</text>
<text x="379.5" y="101.9" font-size="10.5" fill="#4553bd" text-anchor="middle" font-family="'Liberation Sans',sans-serif" stroke="#fff" stroke-width="2" stroke-opacity="0.7" paint-order="stroke" stroke-linejoin="round" font-weight="bold">Dublin</text>
<text x="379.5" y="114" font-size="10.5" fill="#4553bd" text-anchor="middle" font-family="'Liberation Sans',sans-serif" stroke="#fff" stroke-width="2" stroke-opacity="0.7" paint-order="stroke" stroke-linejoin="round" font-weight="bold">Connolly</text>
<text x="437.3" y="93.5" font-size="10" fill="#777" text-anchor="middle" font-family="'Liberation Sans',sans-serif" stroke="#fff" stroke-width="2" stroke-opacity="0.7" paint-order="stroke" stroke-linejoin="round" font-style="italic">Sheriff</text>
<text x="437.3" y="105.2" font-size="10" fill="#777" text-anchor="middle" font-family="'Liberation Sans',sans-serif" stroke="#fff" stroke-width="2" stroke-opacity="0.7" paint-order="stroke" stroke-linejoin="round" font-style="italic">Street</text>
<text x="0" y="0" font-size="10" fill="#6a96cf" text-anchor="middle" font-family="'Liberation Sans',sans-serif" stroke="#fff" stroke-width="2" stroke-opacity="0.7" paint-order="stroke" stroke-linejoin="round" font-style="italic" transform="translate(452,81) rotate(73)">Royal Canal</text>
<text x="0" y="0" font-size="10.5" fill="#333" text-anchor="middle" font-family="'Liberation Sans',sans-serif" stroke="#fff" stroke-width="2" stroke-opacity="0.7" paint-order="stroke" stroke-linejoin="round" transform="translate(289,44.5) rotate(-33)">Summerhill</text>
<text x="445.4" y="141.6" font-size="10.5" fill="#4553bd" text-anchor="start" font-family="'Liberation Sans',sans-serif" stroke="#fff" stroke-width="2" stroke-opacity="0.7" paint-order="stroke" stroke-linejoin="round" font-weight="bold">Docklands</text>
<text x="433.2" y="162.9" font-size="15" fill="#777" text-anchor="start" font-family="'Liberation Sans',sans-serif" stroke="#fff" stroke-width="2" stroke-opacity="0.7" paint-order="stroke" stroke-linejoin="round" >North-Wall</text>
<text x="294.5" y="254" font-size="10" fill="#5d6630" text-anchor="middle" font-family="'Liberation Sans',sans-serif" stroke="#fff" stroke-width="2" stroke-opacity="0.7" paint-order="stroke" stroke-linejoin="round" font-style="italic">Trinity</text>
<text x="294.5" y="265.5" font-size="10" fill="#5d6630" text-anchor="middle" font-family="'Liberation Sans',sans-serif" stroke="#fff" stroke-width="2" stroke-opacity="0.7" paint-order="stroke" stroke-linejoin="round" font-style="italic">College</text>
<text x="294.5" y="277.5" font-size="10" fill="#5d6630" text-anchor="middle" font-family="'Liberation Sans',sans-serif" stroke="#fff" stroke-width="2" stroke-opacity="0.7" paint-order="stroke" stroke-linejoin="round" font-style="italic">Dublin</text>
<text x="364.3" y="284.7" font-size="10.5" fill="#4553bd" text-anchor="middle" font-family="'Liberation Sans',sans-serif" stroke="#fff" stroke-width="2" stroke-opacity="0.7" paint-order="stroke" stroke-linejoin="round" font-weight="bold">Dublin</text>
<text x="364.3" y="296.9" font-size="10.5" fill="#4553bd" text-anchor="middle" font-family="'Liberation Sans',sans-serif" stroke="#fff" stroke-width="2" stroke-opacity="0.7" paint-order="stroke" stroke-linejoin="round" font-weight="bold">Pearse</text>
<text x="469.7" y="353" font-size="10.5" fill="#4553bd" text-anchor="start" font-family="'Liberation Sans',sans-serif" stroke="#fff" stroke-width="2" stroke-opacity="0.7" paint-order="stroke" stroke-linejoin="round" font-weight="bold">Grand</text>
<text x="470.4" y="365.3" font-size="10.5" fill="#4553bd" text-anchor="start" font-family="'Liberation Sans',sans-serif" stroke="#fff" stroke-width="2" stroke-opacity="0.7" paint-order="stroke" stroke-linejoin="round" font-weight="bold">Canal</text>
<text x="472.7" y="377" font-size="10.5" fill="#4553bd" text-anchor="start" font-family="'Liberation Sans',sans-serif" stroke="#fff" stroke-width="2" stroke-opacity="0.7" paint-order="stroke" stroke-linejoin="round" font-weight="bold">Dock</text>
<g transform="translate(231,159)">
<defs><linearGradient id="pg" x1="0" y1="0" x2="0" y2="1"><stop offset="0" stop-color="#3b94d4"/><stop offset="1" stop-color="#2a78c0"/></linearGradient></defs>
<path d="M12.5 0.6C5.9 0.6 0.6 5.9 0.6 12.5c0 2.4 0.8 4.5 1.9 6.6L12.5 40.6 22.5 19.1c1.1-2.1 1.9-4.2 1.9-6.6C24.4 5.9 19.1 0.6 12.5 0.6z" fill="url(#pg)" stroke="#2b6fae" stroke-width="1"/>
<circle cx="12.5" cy="12.6" r="4.3" fill="#fff"/></g>
</svg></div><!--/map-->
<div class="flabel" style="left:423px;top:656px">Date</div>
<div class="fid" style="left:423px;top:675px">ID: date</div>
<div class="inp" style="left:595px;top:654px;width:485px"></div>
<div class="flabel" style="left:423px;top:764px">Speakers</div>
<div class="fid" style="left:423px;top:783px">ID: speakers</div>
<div class="flabel" style="left:595px;top:764px">Name</div>
<div class="fid" style="left:595px;top:783px">ID: name</div>
<div class="inp" style="left:718px;top:762px;width:338px"></div>
<div class="flabel" style="left:595px;top:848px">Company</div>
<div class="fid" style="left:595px;top:868px">ID: company</div>
<div class="inp" style="left:718px;top:846px;width:338px"></div>
</body>
</html>
